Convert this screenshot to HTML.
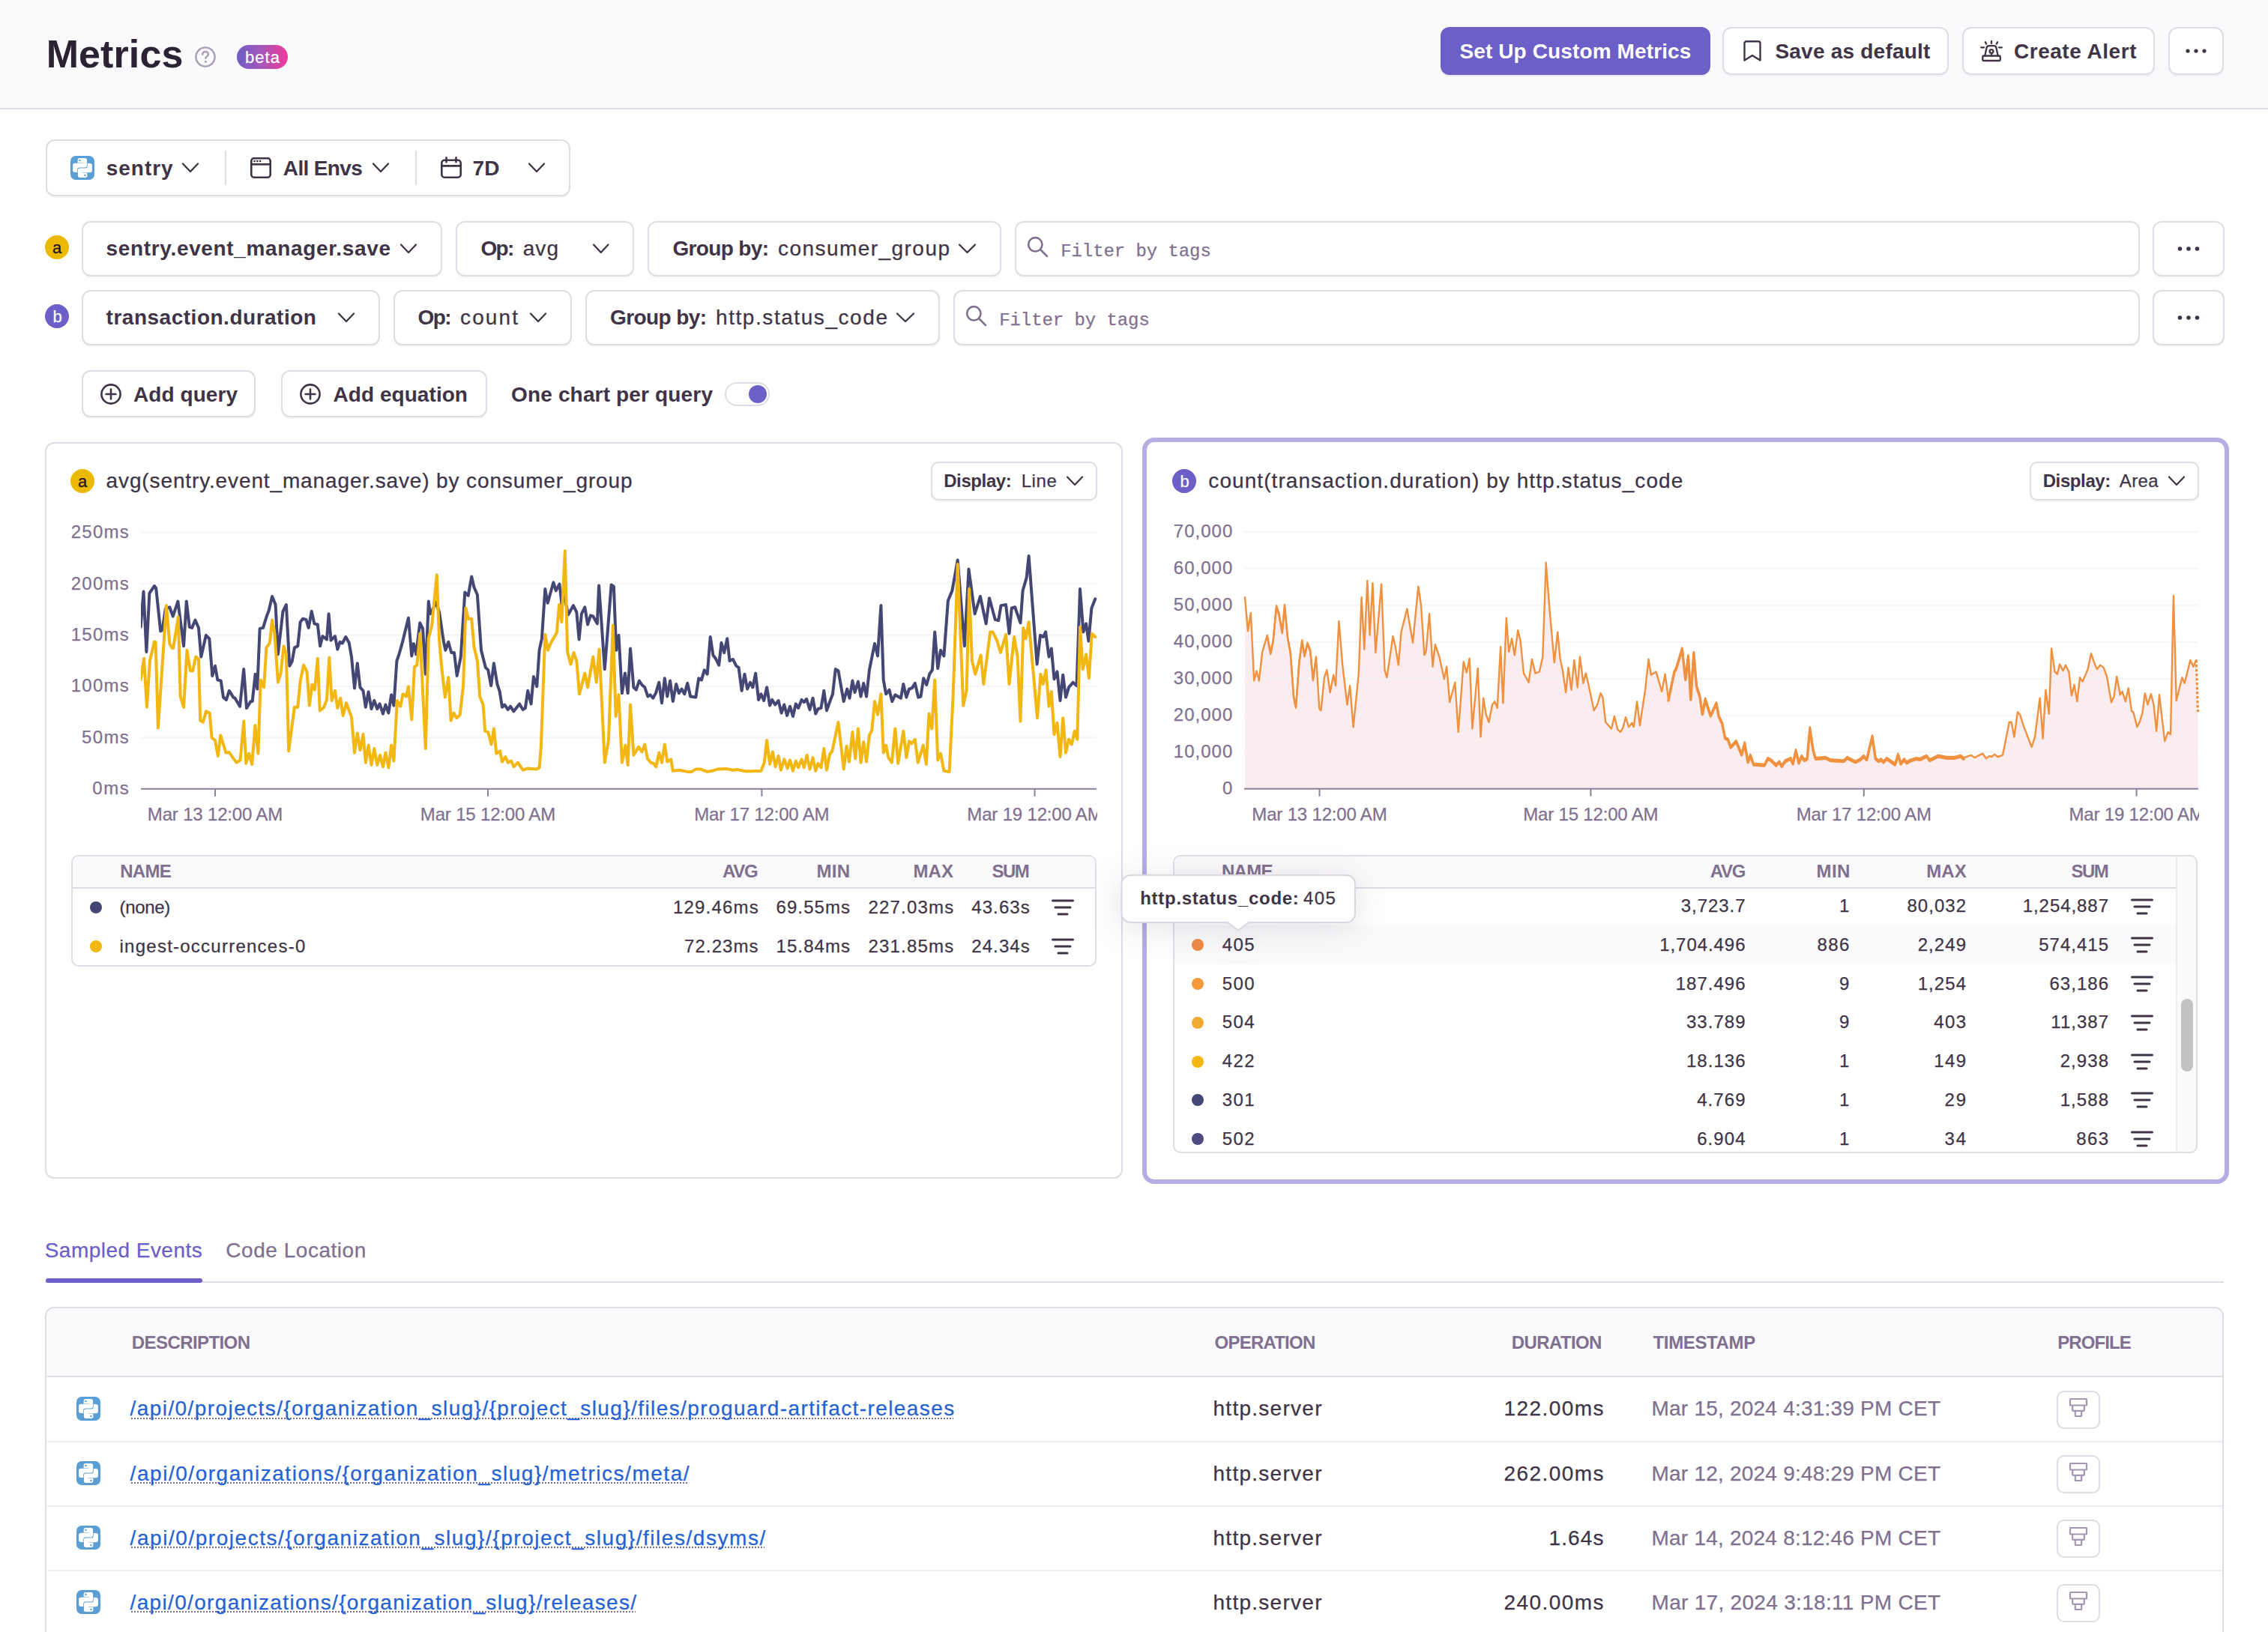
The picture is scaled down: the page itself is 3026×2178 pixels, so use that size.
<!DOCTYPE html>
<html><head><meta charset="utf-8"><style>
html,body{margin:0;padding:0;width:3026px;height:2178px;overflow:hidden;background:#fff;position:relative}
</style></head><body>
<div style="position:absolute;left:0px;top:0px;width:3026px;height:144px;box-sizing:border-box;z-index:1;background:#FAF9FB;"></div>
<div style="position:absolute;left:0px;top:144px;width:3026px;height:2px;box-sizing:border-box;z-index:1;background:#E0DCE5;"></div>
<svg style="position:absolute;left:259px;top:61px;z-index:1;" width="30" height="30" viewBox="0 0 30 30"><circle cx="15" cy="15" r="12.6" fill="none" stroke="#A89FB5" stroke-width="2.4"/><path d="M11.2 11.8c0-2.3 1.7-3.8 3.9-3.8s3.9 1.4 3.9 3.4c0 2.6-3.6 2.8-3.6 5.4" fill="none" stroke="#A89FB5" stroke-width="2.4" stroke-linecap="round"/><circle cx="15.3" cy="21.2" r="1.5" fill="#A89FB5"/></svg>
<div style="position:absolute;left:316px;top:60px;width:68px;height:32px;box-sizing:border-box;z-index:1;border-radius:16px;background:linear-gradient(90deg,#6C5FC7,#A856B8 50%,#F1389A);"></div>
<div style="position:absolute;left:1922px;top:36px;width:360px;height:64px;box-sizing:border-box;z-index:1;background:#6C5FC7;border-radius:12px;box-shadow:0 2px 0 rgba(43,34,51,0.08);"></div>
<div style="position:absolute;left:2298px;top:36px;width:302px;height:64px;box-sizing:border-box;z-index:1;background:#fff;border:2px solid #E0DCE5;border-radius:12px;box-shadow:0 2px 0 rgba(43,34,51,0.04);"></div>
<svg style="position:absolute;left:2322px;top:50px;z-index:3;" width="32" height="36" viewBox="0 0 32 36"><path d="M5.5 7.8a2.5 2.5 0 0 1 2.5-2.5h16a2.5 2.5 0 0 1 2.5 2.5v22.7l-10.5-6.6-10.5 6.6z" fill="none" stroke="#3E3446" stroke-width="2.4" stroke-linejoin="round"/></svg>
<div style="position:absolute;left:2618px;top:36px;width:257px;height:64px;box-sizing:border-box;z-index:1;background:#fff;border:2px solid #E0DCE5;border-radius:12px;box-shadow:0 2px 0 rgba(43,34,51,0.04);"></div>
<svg style="position:absolute;left:2636px;top:48px;z-index:3;" width="40" height="40" viewBox="0 0 40 40"><g fill="none" stroke="#3E3446" stroke-width="2.3" stroke-linecap="round" stroke-linejoin="round"><rect x="9.3" y="26.5" width="23.5" height="6.5" rx="1.2"/><path d="M12.3 26.5L14.6 15.6Q15.2 13.2 17.6 13.2H24.4Q26.8 13.2 27.4 15.6L29.7 26.5"/><circle cx="21" cy="20.6" r="2.4"/><path d="M21 23v3.5M21 7v3M12.8 8.2l1.4 2.4M29.2 8.2l-1.4 2.4M7.2 15.3h3.8M31 15.3h3.8"/></g></svg>
<div style="position:absolute;left:2893px;top:36px;width:74px;height:64px;box-sizing:border-box;z-index:1;background:#fff;border:2px solid #E0DCE5;border-radius:12px;box-shadow:0 2px 0 rgba(43,34,51,0.04);"></div>
<svg style="position:absolute;left:2910px;top:60px;z-index:3;" width="40" height="16" viewBox="0 0 40 16"><g fill="#3E3446"><circle cx="9" cy="8" r="2.6"/><circle cx="20" cy="8" r="2.6"/><circle cx="31" cy="8" r="2.6"/></g></svg>
<div style="position:absolute;left:61px;top:186px;width:700px;height:76px;box-sizing:border-box;z-index:1;background:#fff;border:2px solid #E0DCE5;border-radius:12px;box-shadow:0 2px 0 rgba(43,34,51,0.04);"></div>
<svg style="position:absolute;left:94px;top:208px;z-index:3;" width="32" height="32" viewBox="0 0 32 32"><g transform="scale(1.0)"><rect x="0" y="0" width="32" height="32" rx="7" fill="#5A9ED4"/><path d="M12.2 3.1H19.5A2.6 2.6 0 0 1 22.1 5.7V13A2.4 2.4 0 0 1 19.7 15.4H12.2A3 3 0 0 0 9.2 18.4V22H6A2.9 2.9 0 0 1 3.1 19.1V12.7A2.9 2.9 0 0 1 6 9.8H16V9.3H9.6V5.7A2.6 2.6 0 0 1 12.2 3.1Z" fill="#fff"/><path d="M12.2 3.1H19.5A2.6 2.6 0 0 1 22.1 5.7V13A2.4 2.4 0 0 1 19.7 15.4H12.2A3 3 0 0 0 9.2 18.4V22H6A2.9 2.9 0 0 1 3.1 19.1V12.7A2.9 2.9 0 0 1 6 9.8H16V9.3H9.6V5.7A2.6 2.6 0 0 1 12.2 3.1Z" fill="#fff" transform="rotate(180 16 16)"/><circle cx="12.5" cy="6" r="1.2" fill="#5A9ED4"/><circle cx="19.5" cy="26" r="1.2" fill="#5A9ED4"/></g></svg>
<svg style="position:absolute;left:241px;top:215.0px;z-index:3;" width="26" height="18" viewBox="0 0 26 18"><polyline points="3,3.5 13.0,14 23,3.5" fill="none" stroke="#3E3446" stroke-width="2.3" stroke-linecap="round" stroke-linejoin="round"/></svg>
<div style="position:absolute;left:300px;top:201px;width:2px;height:46px;box-sizing:border-box;z-index:1;background:#E0DCE5;"></div>
<svg style="position:absolute;left:330px;top:206px;z-index:3;" width="36" height="36" viewBox="0 0 36 36"><g fill="none" stroke="#3E3446" stroke-width="2.6"><rect x="5.3" y="5.3" width="25.4" height="25.4" rx="3.5"/><path d="M5.3 13.3h25.4"/></g><g fill="#3E3446"><circle cx="9.6" cy="9.1" r="1.35"/><circle cx="13.4" cy="9.1" r="1.35"/><circle cx="17.2" cy="9.1" r="1.35"/></g></svg>
<svg style="position:absolute;left:495px;top:215.0px;z-index:3;" width="26" height="18" viewBox="0 0 26 18"><polyline points="3,3.5 13.0,14 23,3.5" fill="none" stroke="#3E3446" stroke-width="2.3" stroke-linecap="round" stroke-linejoin="round"/></svg>
<div style="position:absolute;left:554px;top:201px;width:2px;height:46px;box-sizing:border-box;z-index:1;background:#E0DCE5;"></div>
<svg style="position:absolute;left:584px;top:205px;z-index:3;" width="36" height="36" viewBox="0 0 36 36"><g fill="none" stroke="#3E3446" stroke-width="2.6" stroke-linecap="round"><rect x="5.3" y="8.7" width="25.4" height="23" rx="3.8"/><path d="M5.3 16.4h25.4M11.5 5.4v5.8M24.5 5.4v5.8"/></g></svg>
<svg style="position:absolute;left:703px;top:215.0px;z-index:3;" width="26" height="18" viewBox="0 0 26 18"><polyline points="3,3.5 13.0,14 23,3.5" fill="none" stroke="#3E3446" stroke-width="2.3" stroke-linecap="round" stroke-linejoin="round"/></svg>
<div style="position:absolute;left:60px;top:314px;width:32px;height:32px;box-sizing:border-box;z-index:1;background:#EBBA00;border-radius:50%;"></div>
<div style="position:absolute;left:109px;top:295px;width:481px;height:74px;box-sizing:border-box;z-index:1;background:#fff;border:2px solid #E0DCE5;border-radius:12px;box-shadow:0 2px 0 rgba(43,34,51,0.04);"></div>
<div style="position:absolute;left:608px;top:295px;width:238px;height:74px;box-sizing:border-box;z-index:1;background:#fff;border:2px solid #E0DCE5;border-radius:12px;box-shadow:0 2px 0 rgba(43,34,51,0.04);"></div>
<div style="position:absolute;left:864px;top:295px;width:472px;height:74px;box-sizing:border-box;z-index:1;background:#fff;border:2px solid #E0DCE5;border-radius:12px;box-shadow:0 2px 0 rgba(43,34,51,0.04);"></div>
<div style="position:absolute;left:1354px;top:295px;width:1501px;height:74px;box-sizing:border-box;z-index:1;background:#fff;border:2px solid #E0DCE5;border-radius:12px;box-shadow:0 2px 0 rgba(43,34,51,0.04);"></div>
<div style="position:absolute;left:2872px;top:295px;width:96px;height:74px;box-sizing:border-box;z-index:1;background:#fff;border:2px solid #E0DCE5;border-radius:12px;box-shadow:0 2px 0 rgba(43,34,51,0.04);"></div>
<svg style="position:absolute;left:532px;top:323.0px;z-index:3;" width="26" height="18" viewBox="0 0 26 18"><polyline points="3,3.5 13.0,14 23,3.5" fill="none" stroke="#3E3446" stroke-width="2.3" stroke-linecap="round" stroke-linejoin="round"/></svg>
<svg style="position:absolute;left:788.5px;top:323.0px;z-index:3;" width="25.5" height="18" viewBox="0 0 25.5 18"><polyline points="3,3.5 12.75,14 22.5,3.5" fill="none" stroke="#3E3446" stroke-width="2.3" stroke-linecap="round" stroke-linejoin="round"/></svg>
<svg style="position:absolute;left:1277px;top:323.0px;z-index:3;" width="27" height="18" viewBox="0 0 27 18"><polyline points="3,3.5 13.5,14 24,3.5" fill="none" stroke="#3E3446" stroke-width="2.3" stroke-linecap="round" stroke-linejoin="round"/></svg>
<svg style="position:absolute;left:1369px;top:314px;z-index:3;" width="32" height="32" viewBox="0 0 32 32"><g fill="none" stroke="#80708F" stroke-width="2.6" stroke-linecap="round"><circle cx="12.3" cy="12.3" r="9.2"/><path d="M19 19l9 9"/></g></svg>
<svg style="position:absolute;left:2900px;top:324px;z-index:3;" width="40" height="16" viewBox="0 0 40 16"><g fill="#3E3446"><circle cx="8.5" cy="8" r="2.8"/><circle cx="20" cy="8" r="2.8"/><circle cx="31.5" cy="8" r="2.8"/></g></svg>
<div style="position:absolute;left:60px;top:406px;width:32px;height:32px;box-sizing:border-box;z-index:1;background:#6C5FC7;border-radius:50%;"></div>
<div style="position:absolute;left:109px;top:387px;width:398px;height:74px;box-sizing:border-box;z-index:1;background:#fff;border:2px solid #E0DCE5;border-radius:12px;box-shadow:0 2px 0 rgba(43,34,51,0.04);"></div>
<div style="position:absolute;left:525px;top:387px;width:238px;height:74px;box-sizing:border-box;z-index:1;background:#fff;border:2px solid #E0DCE5;border-radius:12px;box-shadow:0 2px 0 rgba(43,34,51,0.04);"></div>
<div style="position:absolute;left:781px;top:387px;width:473px;height:74px;box-sizing:border-box;z-index:1;background:#fff;border:2px solid #E0DCE5;border-radius:12px;box-shadow:0 2px 0 rgba(43,34,51,0.04);"></div>
<div style="position:absolute;left:1272px;top:387px;width:1583px;height:74px;box-sizing:border-box;z-index:1;background:#fff;border:2px solid #E0DCE5;border-radius:12px;box-shadow:0 2px 0 rgba(43,34,51,0.04);"></div>
<div style="position:absolute;left:2872px;top:387px;width:96px;height:74px;box-sizing:border-box;z-index:1;background:#fff;border:2px solid #E0DCE5;border-radius:12px;box-shadow:0 2px 0 rgba(43,34,51,0.04);"></div>
<svg style="position:absolute;left:449px;top:415.0px;z-index:3;" width="26" height="18" viewBox="0 0 26 18"><polyline points="3,3.5 13.0,14 23,3.5" fill="none" stroke="#3E3446" stroke-width="2.3" stroke-linecap="round" stroke-linejoin="round"/></svg>
<svg style="position:absolute;left:705px;top:415.0px;z-index:3;" width="26" height="18" viewBox="0 0 26 18"><polyline points="3,3.5 13.0,14 23,3.5" fill="none" stroke="#3E3446" stroke-width="2.3" stroke-linecap="round" stroke-linejoin="round"/></svg>
<svg style="position:absolute;left:1194px;top:415.0px;z-index:3;" width="28" height="18" viewBox="0 0 28 18"><polyline points="3,3.5 14.0,14 25,3.5" fill="none" stroke="#3E3446" stroke-width="2.3" stroke-linecap="round" stroke-linejoin="round"/></svg>
<svg style="position:absolute;left:1287px;top:406px;z-index:3;" width="32" height="32" viewBox="0 0 32 32"><g fill="none" stroke="#80708F" stroke-width="2.6" stroke-linecap="round"><circle cx="12.3" cy="12.3" r="9.2"/><path d="M19 19l9 9"/></g></svg>
<svg style="position:absolute;left:2900px;top:416px;z-index:3;" width="40" height="16" viewBox="0 0 40 16"><g fill="#3E3446"><circle cx="8.5" cy="8" r="2.8"/><circle cx="20" cy="8" r="2.8"/><circle cx="31.5" cy="8" r="2.8"/></g></svg>
<div style="position:absolute;left:109px;top:494px;width:232px;height:63px;box-sizing:border-box;z-index:1;background:#fff;border:2px solid #E0DCE5;border-radius:12px;box-shadow:0 2px 0 rgba(43,34,51,0.04);"></div>
<svg style="position:absolute;left:132px;top:510px;z-index:3;" width="32" height="32" viewBox="0 0 32 32"><g fill="none" stroke="#3E3446" stroke-width="2.6" stroke-linecap="round"><circle cx="16" cy="16" r="12.6"/><path d="M16 9.6v12.8M9.6 16h12.8"/></g></svg>
<div style="position:absolute;left:375px;top:494px;width:275px;height:63px;box-sizing:border-box;z-index:1;background:#fff;border:2px solid #E0DCE5;border-radius:12px;box-shadow:0 2px 0 rgba(43,34,51,0.04);"></div>
<svg style="position:absolute;left:398px;top:510px;z-index:3;" width="32" height="32" viewBox="0 0 32 32"><g fill="none" stroke="#3E3446" stroke-width="2.6" stroke-linecap="round"><circle cx="16" cy="16" r="12.6"/><path d="M16 9.6v12.8M9.6 16h12.8"/></g></svg>
<div style="position:absolute;left:967px;top:510px;width:60px;height:32px;box-sizing:border-box;z-index:1;background:#fff;border:2px solid #E0DCE5;border-radius:16px;"></div>
<div style="position:absolute;left:999px;top:514px;width:24px;height:24px;box-sizing:border-box;z-index:2;background:#6C5FC7;border-radius:50%;"></div>
<div style="position:absolute;left:60px;top:590px;width:1438px;height:983px;box-sizing:border-box;z-index:1;background:#fff;border:2px solid #E0DCE5;border-radius:12px;"></div>
<div style="position:absolute;left:94px;top:626px;width:32px;height:32px;box-sizing:border-box;z-index:2;background:#EBBA00;border-radius:50%;"></div>
<div style="position:absolute;left:1242px;top:616px;width:222px;height:52px;box-sizing:border-box;z-index:2;background:#fff;border:2px solid #E0DCE5;border-radius:10px;box-shadow:0 2px 0 rgba(43,34,51,0.04);"></div>
<svg style="position:absolute;left:1421px;top:633.0px;z-index:3;" width="26" height="18" viewBox="0 0 26 18"><polyline points="3,3.5 13.0,14 23,3.5" fill="none" stroke="#3E3446" stroke-width="2.2" stroke-linecap="round" stroke-linejoin="round"/></svg>
<svg style="position:absolute;left:0;top:0;z-index:2" width="3026" height="1120"><defs><clipPath id="ca"><rect x="188" y="650" width="1277" height="420"/></clipPath></defs><g clip-path="url(#ca)"><rect x="188" y="709.8" width="1275" height="2" fill="#F4F2F6" fill-opacity="0.85"/><rect x="188" y="778.2" width="1275" height="2" fill="#F4F2F6" fill-opacity="0.85"/><rect x="188" y="846.6" width="1275" height="2" fill="#F4F2F6" fill-opacity="0.85"/><rect x="188" y="915.0" width="1275" height="2" fill="#F4F2F6" fill-opacity="0.85"/><rect x="188" y="983.4" width="1275" height="2" fill="#F4F2F6" fill-opacity="0.85"/><rect x="188" y="1051.8" width="1275" height="2" fill="#8D7F9C"/><rect x="286" y="1052.8" width="2" height="10" fill="#8D7F9C"/><rect x="650" y="1052.8" width="2" height="10" fill="#8D7F9C"/><rect x="1015.4" y="1052.8" width="2" height="10" fill="#8D7F9C"/><rect x="1379.5" y="1052.8" width="2" height="10" fill="#8D7F9C"/><polyline points="187.7,836.8 191.5,789.4 195.4,869.9 199.4,791.6 206.0,782.0 208.2,785.0 214.2,842.3 216.5,841.0 220.8,812.5 226.3,810.3 230.7,822.5 237.4,802.6 245.1,862.2 248.8,802.6 252.8,836.8 256.1,837.9 260.5,827.5 265.0,838.0 268.3,876.5 274.9,847.8 279.3,852.3 283.3,901.9 287.0,888.7 290.3,907.4 294.7,908.5 298.0,930.6 302.0,933.9 305.8,921.8 311.3,930.6 313.5,931.7 320.1,942.8 325.2,893.1 329.0,945.0 334.5,936.0 336.7,936.0 340.6,899.7 343.3,919.5 346.6,839.0 351.0,837.9 355.4,823.6 358.7,814.7 363.1,796.0 367.6,807.0 370.9,873.2 377.5,815.8 381.9,807.0 386.3,888.7 389.6,883.1 393.0,864.4 397.3,862.2 400.7,830.2 404.0,825.8 408.4,826.9 411.7,837.9 415.7,815.8 419.4,832.4 423.8,833.5 427.1,862.2 430.4,849.0 436.0,853.4 438.6,819.2 441.5,854.5 447.0,849.0 450.3,866.6 453.6,856.7 456.9,858.4 461.3,850.0 465.7,857.8 469.0,876.5 473.0,918.4 476.8,885.3 480.5,917.3 484.5,921.8 487.8,943.8 491.6,923.3 495.5,946.0 499.3,935.0 503.3,946.0 506.6,939.4 511.0,952.6 514.4,940.5 518.4,951.5 522.1,927.3 525.4,941.6 529.4,882.0 532.1,874.3 536.5,858.9 544.9,824.7 549.3,875.4 551.9,858.9 555.2,873.2 560.3,831.3 564.1,839.0 567.8,899.7 571.8,802.6 574.0,819.2 577.3,813.6 581.7,803.7 586.1,816.9 591.6,854.5 594.3,867.7 598.3,856.7 602.2,871.0 606.0,871.0 609.7,901.9 614.8,876.5 620.3,790.5 624.7,794.9 629.2,769.5 632.5,783.8 636.9,793.8 642.0,867.7 647.9,890.9 651.2,894.2 655.2,915.1 658.9,885.3 663.4,912.9 666.7,922.9 670.0,943.8 673.3,940.5 677.7,947.1 681.0,942.7 685.4,949.3 693.1,939.4 697.6,947.1 700.9,944.9 704.2,921.8 708.6,939.4 711.9,903.0 716.3,916.2 719.6,867.7 722.9,852.3 727.3,786.1 730.7,804.8 738.4,777.2 741.7,788.3 746.5,779.4 749.4,805.9 752.7,794.9 758.2,820.3 764.9,808.1 769.3,816.9 772.6,853.4 775.9,819.2 780.3,810.3 784.1,833.5 788.0,821.4 791.3,822.5 796.8,832.4 799.1,781.6 806.8,893.1 815.6,780.5 818.9,782.7 822.2,867.7 825.5,847.8 829.9,925.1 833.9,898.6 837.7,925.1 841.0,865.5 845.4,917.3 848.8,920.7 852.8,908.5 856.5,914.0 860.3,917.3 864.3,929.5 867.6,927.3 871.3,931.7 874.9,925.1 879.3,910.7 883.0,938.3 886.8,905.2 890.3,929.5 894.1,908.5 897.8,936.1 902.2,912.9 905.8,925.1 909.5,919.5 913.3,926.2 917.2,911.8 921.2,929.5 928.3,930.6 932.2,905.2 936.0,907.4 939.7,894.2 943.7,899.7 947.7,850.0 951.4,874.3 954.7,878.7 959.2,887.6 962.5,857.8 966.2,871.0 970.2,852.3 973.5,882.0 977.9,879.8 982.3,888.7 985.6,890.9 989.6,921.8 993.4,899.7 997.1,919.5 1001.1,910.7 1004.4,917.3 1008.1,898.6 1012.1,933.9 1015.4,926.2 1019.2,935.0 1023.1,917.3 1027.1,941.6 1030.2,933.9 1034.2,940.5 1038.6,935.0 1042.6,951.5 1046.3,940.5 1050.1,954.9 1054.0,942.7 1058.0,956.0 1061.8,939.4 1065.1,944.9 1069.5,933.9 1072.8,937.2 1076.1,932.8 1080.5,947.1 1084.5,931.7 1088.2,952.6 1091.5,946.0 1095.5,944.9 1099.3,921.8 1103.0,948.2 1108.1,933.9 1111.0,926.2 1114.7,893.1 1118.5,895.3 1125.7,936.1 1130.2,919.5 1133.5,931.7 1137.4,908.5 1140.5,924.0 1144.9,909.6 1148.5,929.5 1152.2,911.8 1156.0,929.5 1159.9,894.2 1167.0,858.9 1171.0,875.4 1175.4,808.1 1178.7,907.4 1182.1,926.2 1186.5,920.7 1190.3,936.1 1194.3,927.3 1202.0,931.7 1205.3,912.9 1209.3,930.6 1213.0,919.5 1216.8,918.4 1220.8,911.8 1225.2,930.6 1228.5,929.5 1232.2,905.2 1236.2,914.0 1240.2,899.7 1243.9,894.2 1247.2,843.4 1251.2,892.0 1255.0,867.7 1259.4,875.4 1264.9,801.5 1270.4,788.3 1277.7,747.4 1286.9,862.2 1292.5,759.6 1300.6,819.2 1307.9,796.0 1315.6,832.4 1320.0,798.2 1327.8,826.9 1332.2,828.0 1335.5,808.1 1342.1,807.0 1346.5,845.6 1349.8,811.4 1354.2,810.3 1361.5,831.3 1364.6,788.3 1369.7,770.6 1372.6,741.9 1383.6,886.5 1388.0,847.8 1391.8,850.0 1395.1,843.4 1399.5,876.5 1402.8,865.5 1406.5,906.3 1410.5,896.4 1414.5,935.0 1418.2,900.8 1422.0,930.6 1426.0,917.3 1431.5,910.7 1436.5,915.1 1441.0,786.1 1445.4,843.4 1449.1,832.4 1452.4,855.6 1456.4,811.4 1461.3,799.3" fill="none" stroke="#444674" stroke-width="4" stroke-linejoin="round" stroke-linecap="round"/><polyline points="187.7,907.4 192.1,878.7 195.9,943.8 199.9,882.0 206.0,856.2 207.6,857.0 210.9,971.4 221.9,808.1 226.3,858.9 229.6,865.0 231.2,865.0 237.8,823.6 240.7,929.5 245.1,943.8 249.5,867.7 253.9,895.3 257.2,895.3 261.2,876.5 265.0,879.8 267.2,961.5 270.9,963.7 274.9,949.3 279.7,951.5 282.6,984.6 287.0,988.0 290.8,1008.9 294.3,981.3 301.4,1004.5 305.8,1004.0 311.3,1012.2 315.7,1017.7 320.6,1014.4 325.2,962.6 328.3,1018.8 332.2,1005.6 336.2,1020.0 340.4,968.1 344.4,1005.6 347.7,907.4 352.1,917.3 355.4,864.4 359.8,858.4 363.1,827.5 366.4,845.6 370.9,910.7 374.6,898.6 378.6,862.2 381.9,873.2 385.2,1002.3 392.9,943.8 397.3,943.8 400.7,908.5 405.1,887.6 409.5,896.4 412.8,941.6 416.5,913.6 419.9,920.6 423.8,878.7 426.7,948.2 431.5,944.9 436.0,933.9 439.3,877.6 442.6,935.0 447.0,921.8 450.3,945.0 454.3,931.7 457.6,954.9 462.0,938.3 469.0,957.1 473.0,1004.5 476.8,978.5 480.5,1001.2 484.5,979.8 487.8,1017.7 491.6,994.6 495.5,1021.0 499.3,999.0 503.3,1021.0 507.0,1007.8 511.0,1023.3 514.4,1004.5 518.4,1024.4 522.1,994.6 525.4,1015.5 529.9,935.0 534.3,942.7 537.6,926.2 542.0,929.5 544.9,916.2 549.3,960.4 553.0,889.8 556.3,887.6 560.3,845.6 567.8,999.0 571.8,852.3 576.2,834.6 582.8,767.3 586.1,854.5 589.4,892.0 593.8,930.6 598.3,904.1 601.6,961.5 605.3,951.5 609.3,958.2 613.7,953.8 618.1,915.1 621.4,811.4 624.7,825.8 629.2,825.8 632.5,863.3 636.9,882.0 640.2,929.5 644.6,940.5 647.2,975.8 651.2,976.9 655.6,993.5 658.9,972.5 662.3,1005.6 667.1,1002.3 670.0,1016.6 674.4,1010.0 677.7,1017.7 682.1,1015.5 685.4,1023.3 690.9,1017.7 697.6,1027.7 704.2,1025.5 715.2,1026.6 719.6,1024.4 721.8,997.9 727.3,846.7 731.1,867.7 735.1,857.8 739.5,850.0 742.8,844.5 746.1,807.0 749.4,830.2 753.8,735.3 757.1,869.9 761.5,886.5 765.5,871.0 769.3,882.0 773.0,926.2 780.3,898.6 784.1,917.3 791.3,876.5 795.7,910.7 799.5,866.6 806.8,1017.7 811.9,988.0 817.8,834.6 821.6,956.0 825.5,927.3 829.9,1017.7 834.4,994.6 837.7,1021.1 841.0,940.5 845.4,1007.8 852.1,996.8 856.5,1003.4 860.3,993.5 863.8,1012.2 868.2,1017.7 872.0,1018.8 875.3,1023.3 879.3,1004.5 883.0,1017.7 886.8,993.5 890.3,1016.6 895.2,1013.3 897.8,1028.8 906.2,1027.7 917.2,1029.9 922.7,1029.9 928.3,1026.6 934.9,1026.6 943.7,1029.9 950.3,1028.8 956.9,1026.6 970.2,1026.1 977.9,1027.7 983.4,1027.0 994.5,1029.2 1003.3,1029.2 1015.4,1028.8 1019.8,1017.7 1023.1,988.0 1027.1,1019.9 1030.9,1003.4 1034.6,1023.3 1038.6,1008.9 1041.9,1027.7 1046.3,1013.3 1050.7,1025.5 1054.0,1014.4 1058.0,1028.8 1061.8,1015.5 1065.1,1024.4 1069.5,1013.3 1072.8,1024.4 1076.5,1007.8 1080.5,1026.6 1084.5,1011.1 1088.2,1028.8 1091.5,1018.8 1095.5,1024.4 1099.3,999.0 1103.0,1027.7 1107.0,1006.7 1110.3,1002.3 1113.6,986.8 1118.5,963.7 1125.7,1026.6 1129.5,995.7 1133.0,1016.6 1137.4,976.9 1141.2,1012.2 1144.9,972.5 1148.5,1017.7 1152.2,990.2 1156.0,1016.6 1159.9,981.3 1163.3,974.7 1167.0,936.1 1171.0,953.8 1175.4,926.2 1178.7,1004.5 1182.1,994.6 1185.4,1011.1 1189.9,1017.7 1194.3,972.5 1198.2,1018.8 1205.3,975.8 1209.3,1011.1 1213.0,989.1 1216.3,992.4 1220.8,986.8 1224.7,1017.7 1231.8,994.6 1235.8,1019.9 1239.5,952.6 1243.3,972.5 1247.2,907.4 1251.2,1014.4 1255.0,1005.6 1259.4,1028.8 1266.6,1029.9 1271.5,931.7 1277.7,753.0 1285.2,941.6 1289.6,921.8 1293.1,786.1 1296.9,882.0 1301.3,899.7 1308.6,874.3 1312.3,912.9 1321.1,843.4 1324.5,843.4 1330.0,854.5 1335.0,871.0 1342.1,846.7 1346.5,912.9 1353.1,850.0 1357.6,876.5 1361.5,962.6 1365.3,837.9 1368.6,852.3 1372.6,830.2 1384.0,958.2 1388.4,899.7 1391.8,912.9 1395.5,894.2 1399.5,942.7 1402.8,922.9 1406.5,980.2 1410.5,964.8 1414.5,1010.0 1418.2,958.2 1422.0,1004.5 1426.0,986.8 1429.9,993.5 1433.7,975.8 1437.4,986.8 1441.0,836.8 1444.7,893.1 1449.1,873.2 1452.9,905.2 1456.8,845.6 1461.3,850.0" fill="none" stroke="#F2B712" stroke-width="4" stroke-linejoin="round" stroke-linecap="round"/></g></svg>
<div style="position:absolute;left:1464px;top:1070px;width:30px;height:35px;box-sizing:border-box;z-index:4;background:#fff;"></div>
<div style="position:absolute;left:94.5px;top:1140.5px;width:1368.5px;height:149.5px;box-sizing:border-box;z-index:1;background:#fff;border:2px solid #E0DCE5;border-radius:10px;overflow:hidden;"></div>
<div style="position:absolute;left:96.5px;top:1142.5px;width:1364.5px;height:41.5px;box-sizing:border-box;z-index:1;background:#FAF9FB;border-radius:8px 8px 0 0;"></div>
<div style="position:absolute;left:96.5px;top:1184px;width:1364.5px;height:2px;box-sizing:border-box;z-index:1;background:#E0DCE5;"></div>
<div style="position:absolute;left:120px;top:1203.0px;width:16px;height:16.0px;box-sizing:border-box;z-index:2;background:#444674;border-radius:50%;"></div>
<svg style="position:absolute;left:1401px;top:1197.0px;z-index:3;" width="34" height="28" viewBox="0 0 34 28"><g stroke="#3E3446" stroke-width="3" stroke-linecap="round"><path d="M3.5 5h27M7 14h20M11 23h12"/></g></svg>
<div style="position:absolute;left:120px;top:1255.4px;width:16px;height:16.0px;box-sizing:border-box;z-index:2;background:#F2B712;border-radius:50%;"></div>
<svg style="position:absolute;left:1401px;top:1249.4px;z-index:3;" width="34" height="28" viewBox="0 0 34 28"><g stroke="#3E3446" stroke-width="3" stroke-linecap="round"><path d="M3.5 5h27M7 14h20M11 23h12"/></g></svg>
<div style="position:absolute;left:1524px;top:584px;width:1450px;height:996px;box-sizing:border-box;z-index:1;background:#fff;border:6px solid #B4AEE2;border-radius:16px;"></div>
<div style="position:absolute;left:1564px;top:626px;width:32px;height:32px;box-sizing:border-box;z-index:2;background:#6C5FC7;border-radius:50%;"></div>
<div style="position:absolute;left:2707.5px;top:616px;width:226.0px;height:52px;box-sizing:border-box;z-index:2;background:#fff;border:2px solid #E0DCE5;border-radius:10px;box-shadow:0 2px 0 rgba(43,34,51,0.04);"></div>
<svg style="position:absolute;left:2891px;top:633.0px;z-index:3;" width="26" height="18" viewBox="0 0 26 18"><polyline points="3,3.5 13.0,14 23,3.5" fill="none" stroke="#3E3446" stroke-width="2.2" stroke-linecap="round" stroke-linejoin="round"/></svg>
<svg style="position:absolute;left:0;top:0;z-index:2" width="3026" height="1120"><defs><clipPath id="cb"><rect x="1660" y="650" width="1275" height="420"/></clipPath></defs><g clip-path="url(#cb)"><polygon points="1661.0,1052.7 1661.0,797.1 1665.0,842.3 1668.8,818.0 1673.2,908.5 1676.5,895.3 1679.8,908.5 1684.2,869.9 1690.8,847.8 1695.2,871.0 1698.5,855.6 1703.0,808.1 1706.3,818.0 1710.7,843.4 1714.0,807.0 1718.0,850.0 1721.7,869.9 1726.1,929.5 1729.0,942.7 1733.4,883.1 1737.2,854.5 1740.5,874.3 1744.4,857.8 1748.2,867.7 1751.9,906.3 1755.9,876.5 1760.3,946.0 1762.5,948.2 1766.9,904.1 1770.3,894.2 1774.7,924.0 1779.1,900.8 1782.0,915.1 1786.4,829.1 1791.2,887.6 1797.4,940.5 1801.1,915.1 1805.6,970.3 1812.8,898.6 1816.6,797.1 1820.3,866.6 1824.3,775.0 1827.6,847.8 1831.4,778.3 1835.3,871.0 1843.1,779.4 1847.5,894.2 1850.4,904.1 1858.5,848.9 1861.8,863.3 1865.8,887.6 1869.5,843.4 1877.3,812.5 1885.0,857.8 1892.3,782.7 1896.0,808.1 1900.4,874.3 1902.6,869.9 1907.1,819.2 1911.5,889.8 1914.8,860.0 1920.3,876.5 1926.9,906.3 1930.2,889.8 1934.2,937.2 1941.3,910.7 1945.7,976.9 1952.7,883.1 1956.7,897.5 1960.7,878.7 1964.4,972.5 1971.7,892.0 1975.5,983.5 1979.2,931.7 1982.7,953.8 1986.5,963.7 1991.0,940.5 1994.3,936.1 1997.7,944.9 2002.1,863.3 2005.4,938.3 2009.8,824.7 2013.1,869.9 2017.1,852.3 2020.8,874.3 2025.2,841.2 2028.5,854.5 2033.0,898.6 2039.6,910.7 2044.0,879.8 2048.4,898.6 2053.9,896.4 2058.3,876.5 2062.7,750.8 2067.2,810.3 2073.8,884.2 2078.2,843.4 2081.5,878.7 2084.8,894.2 2089.2,924.0 2092.5,890.9 2096.5,920.7 2100.3,880.9 2104.7,917.3 2108.0,876.5 2112.4,911.8 2115.7,898.6 2119.0,911.8 2126.7,948.2 2131.1,940.5 2135.6,925.1 2138.4,930.6 2142.2,963.7 2149.9,972.5 2153.9,956.0 2158.3,973.6 2162.0,976.9 2165.3,971.4 2169.1,957.1 2173.1,970.3 2177.5,964.8 2179.7,970.3 2184.1,936.1 2187.9,968.1 2195.1,920.7 2199.5,879.8 2202.9,900.8 2209.5,896.4 2217.2,922.9 2221.6,899.7 2226.0,932.8 2233.8,895.3 2236.4,890.9 2244.3,864.4 2248.8,905.2 2252.5,874.3 2255.8,931.7 2259.8,869.9 2263.5,914.0 2268.0,928.4 2271.3,951.5 2275.2,931.7 2282.3,953.8 2290.0,937.2 2293.3,954.9 2297.7,963.7 2301.7,983.5 2305.5,985.7 2309.2,995.7 2316.5,988.0 2323.7,1005.6 2327.7,990.2 2332.1,1015.5 2335.4,1006.7 2339.8,1018.8 2354.1,1019.9 2358.5,1011.1 2363.0,1013.3 2369.6,1019.9 2374.0,1015.5 2377.3,1021.1 2381.7,1014.4 2389.4,1011.1 2392.1,1017.7 2396.1,1000.1 2400.0,1016.6 2403.8,1007.8 2407.5,1013.3 2411.1,1011.1 2414.8,970.3 2419.2,1000.1 2422.5,1011.1 2435.8,1010.0 2442.4,1013.3 2460.0,1014.4 2464.5,1010.0 2475.5,1015.5 2482.1,1012.2 2486.5,1007.8 2490.5,1012.2 2498.0,981.3 2502.4,1011.1 2506.4,1014.4 2509.7,1012.2 2513.0,1015.5 2517.4,1011.1 2528.4,1018.8 2532.4,1005.6 2536.2,1017.7 2540.6,1012.2 2543.9,1016.6 2549.4,1013.3 2557.1,1011.1 2561.5,1012.2 2570.4,1007.8 2574.8,1013.3 2585.8,1007.8 2596.8,1010.0 2607.9,1010.0 2615.6,1007.8 2620.0,1011.1 2629.9,1007.8 2634.4,1011.1 2645.4,1005.6 2649.9,1012.2 2654.3,1008.9 2657.7,1010.0 2661.0,1006.7 2665.4,1010.0 2672.0,1007.8 2680.8,963.7 2683.7,963.7 2687.4,983.5 2691.9,950.4 2695.2,953.8 2699.6,968.1 2710.6,996.8 2715.0,983.5 2721.6,931.7 2725.6,985.7 2729.4,920.7 2733.8,952.6 2737.1,865.5 2741.5,896.4 2744.8,899.7 2748.1,886.5 2752.5,895.3 2755.8,887.6 2760.3,896.4 2764.0,928.4 2767.5,914.0 2771.3,936.1 2775.0,904.1 2778.6,909.6 2785.6,893.1 2790.0,872.1 2794.5,885.3 2797.8,893.1 2802.2,887.6 2806.6,890.9 2811.0,903.0 2817.0,937.2 2820.5,929.5 2824.2,903.0 2828.7,927.3 2831.5,922.9 2835.9,936.1 2839.7,918.4 2844.1,949.3 2846.3,950.4 2851.4,970.3 2855.1,962.6 2858.4,951.5 2861.8,925.1 2865.5,940.5 2869.9,926.2 2873.5,940.5 2877.2,975.8 2881.0,927.3 2888.2,989.1 2892.6,976.9 2896.0,980.2 2899.9,794.9 2903.7,935.0 2911.4,904.1 2914.7,911.8 2922.4,880.9 2926.4,889.8 2930.2,880.9 2932.5,950.0 2932.5,1052.7" fill="#FBEDEF"/><rect x="1660" y="708.8" width="1273" height="2" fill="#F4F2F6" fill-opacity="0.85"/><rect x="1660" y="757.8" width="1273" height="2" fill="#F4F2F6" fill-opacity="0.85"/><rect x="1660" y="806.8" width="1273" height="2" fill="#F4F2F6" fill-opacity="0.85"/><rect x="1660" y="855.8" width="1273" height="2" fill="#F4F2F6" fill-opacity="0.85"/><rect x="1660" y="904.7" width="1273" height="2" fill="#F4F2F6" fill-opacity="0.85"/><rect x="1660" y="953.7" width="1273" height="2" fill="#F4F2F6" fill-opacity="0.85"/><rect x="1660" y="1002.7" width="1273" height="2" fill="#F4F2F6" fill-opacity="0.85"/><rect x="1660" y="1051.7" width="1273" height="2" fill="#8D7F9C"/><rect x="1759.5" y="1052.7" width="2" height="10" fill="#8D7F9C"/><rect x="2121.4" y="1052.7" width="2" height="10" fill="#8D7F9C"/><rect x="2485.8" y="1052.7" width="2" height="10" fill="#8D7F9C"/><rect x="2849.6" y="1052.7" width="2" height="10" fill="#8D7F9C"/><polyline points="1661.0,797.1 1665.0,842.3 1668.8,818.0 1673.2,908.5 1676.5,895.3 1679.8,908.5 1684.2,869.9 1690.8,847.8 1695.2,871.0 1698.5,855.6 1703.0,808.1 1706.3,818.0 1710.7,843.4 1714.0,807.0 1718.0,850.0 1721.7,869.9 1726.1,929.5 1729.0,942.7 1733.4,883.1 1737.2,854.5 1740.5,874.3 1744.4,857.8 1748.2,867.7 1751.9,906.3 1755.9,876.5 1760.3,946.0 1762.5,948.2 1766.9,904.1 1770.3,894.2 1774.7,924.0 1779.1,900.8 1782.0,915.1 1786.4,829.1 1791.2,887.6 1797.4,940.5 1801.1,915.1 1805.6,970.3 1812.8,898.6 1816.6,797.1 1820.3,866.6 1824.3,775.0 1827.6,847.8 1831.4,778.3 1835.3,871.0 1843.1,779.4 1847.5,894.2 1850.4,904.1 1858.5,848.9 1861.8,863.3 1865.8,887.6 1869.5,843.4 1877.3,812.5 1885.0,857.8 1892.3,782.7 1896.0,808.1 1900.4,874.3 1902.6,869.9 1907.1,819.2 1911.5,889.8 1914.8,860.0 1920.3,876.5 1926.9,906.3 1930.2,889.8 1934.2,937.2 1941.3,910.7 1945.7,976.9 1952.7,883.1 1956.7,897.5 1960.7,878.7 1964.4,972.5 1971.7,892.0 1975.5,983.5 1979.2,931.7 1982.7,953.8 1986.5,963.7 1991.0,940.5 1994.3,936.1 1997.7,944.9 2002.1,863.3 2005.4,938.3 2009.8,824.7 2013.1,869.9 2017.1,852.3 2020.8,874.3 2025.2,841.2 2028.5,854.5 2033.0,898.6 2039.6,910.7 2044.0,879.8 2048.4,898.6 2053.9,896.4 2058.3,876.5 2062.7,750.8 2067.2,810.3 2073.8,884.2 2078.2,843.4 2081.5,878.7 2084.8,894.2 2089.2,924.0 2092.5,890.9 2096.5,920.7 2100.3,880.9 2104.7,917.3 2108.0,876.5 2112.4,911.8 2115.7,898.6 2119.0,911.8 2126.7,948.2 2131.1,940.5 2135.6,925.1 2138.4,930.6 2142.2,963.7 2149.9,972.5 2153.9,956.0 2158.3,973.6 2162.0,976.9 2165.3,971.4 2169.1,957.1 2173.1,970.3 2177.5,964.8 2179.7,970.3 2184.1,936.1 2187.9,968.1 2195.1,920.7 2199.5,879.8 2202.9,900.8 2209.5,896.4 2217.2,922.9 2221.6,899.7 2226.0,932.8 2233.8,895.3 2236.4,890.9 2244.3,864.4 2248.8,905.2 2252.5,874.3 2255.8,931.7 2259.8,869.9 2263.5,914.0 2268.0,928.4 2271.3,951.5 2275.2,931.7 2282.3,953.8 2290.0,937.2 2293.3,954.9 2297.7,963.7 2301.7,983.5 2305.5,985.7 2309.2,995.7 2316.5,988.0 2323.7,1005.6 2327.7,990.2 2332.1,1015.5 2335.4,1006.7 2339.8,1018.8 2354.1,1019.9 2358.5,1011.1 2363.0,1013.3 2369.6,1019.9 2374.0,1015.5 2377.3,1021.1 2381.7,1014.4 2389.4,1011.1 2392.1,1017.7 2396.1,1000.1 2400.0,1016.6 2403.8,1007.8 2407.5,1013.3 2411.1,1011.1 2414.8,970.3 2419.2,1000.1 2422.5,1011.1 2435.8,1010.0 2442.4,1013.3 2460.0,1014.4 2464.5,1010.0 2475.5,1015.5 2482.1,1012.2 2486.5,1007.8 2490.5,1012.2 2498.0,981.3 2502.4,1011.1 2506.4,1014.4 2509.7,1012.2 2513.0,1015.5 2517.4,1011.1 2528.4,1018.8 2532.4,1005.6 2536.2,1017.7 2540.6,1012.2 2543.9,1016.6 2549.4,1013.3 2557.1,1011.1 2561.5,1012.2 2570.4,1007.8 2574.8,1013.3 2585.8,1007.8 2596.8,1010.0 2607.9,1010.0 2615.6,1007.8 2620.0,1011.1 2629.9,1007.8 2634.4,1011.1 2645.4,1005.6 2649.9,1012.2 2654.3,1008.9 2657.7,1010.0 2661.0,1006.7 2665.4,1010.0 2672.0,1007.8 2680.8,963.7 2683.7,963.7 2687.4,983.5 2691.9,950.4 2695.2,953.8 2699.6,968.1 2710.6,996.8 2715.0,983.5 2721.6,931.7 2725.6,985.7 2729.4,920.7 2733.8,952.6 2737.1,865.5 2741.5,896.4 2744.8,899.7 2748.1,886.5 2752.5,895.3 2755.8,887.6 2760.3,896.4 2764.0,928.4 2767.5,914.0 2771.3,936.1 2775.0,904.1 2778.6,909.6 2785.6,893.1 2790.0,872.1 2794.5,885.3 2797.8,893.1 2802.2,887.6 2806.6,890.9 2811.0,903.0 2817.0,937.2 2820.5,929.5 2824.2,903.0 2828.7,927.3 2831.5,922.9 2835.9,936.1 2839.7,918.4 2844.1,949.3 2846.3,950.4 2851.4,970.3 2855.1,962.6 2858.4,951.5 2861.8,925.1 2865.5,940.5 2869.9,926.2 2873.5,940.5 2877.2,975.8 2881.0,927.3 2888.2,989.1 2892.6,976.9 2896.0,980.2 2899.9,794.9 2903.7,935.0 2911.4,904.1 2914.7,911.8 2922.4,880.9 2926.4,889.8 2930.2,880.9" fill="none" stroke="#F0913F" stroke-width="2.4" stroke-linejoin="round" stroke-linecap="round"/><polyline points="2226.0,935.0 2233.8,897.5 2236.4,893.1 2244.3,866.6 2248.8,907.4 2252.5,876.5 2255.8,933.9 2259.8,872.1 2263.5,916.2 2268.0,930.6 2271.3,953.7 2275.2,933.9 2282.3,956.0 2290.0,939.4 2293.3,957.1 2297.7,965.9 2301.7,985.7 2305.5,987.9 2309.2,997.9 2316.5,990.2 2323.7,1007.8 2327.7,992.4 2332.1,1017.7 2335.4,1008.9 2339.8,1021.0 2354.1,1022.1 2358.5,1013.3 2363.0,1015.5 2369.6,1022.1 2374.0,1017.7 2377.3,1023.3 2381.7,1016.6 2389.4,1013.3 2392.1,1019.9 2396.1,1002.3 2400.0,1018.8 2403.8,1010.0 2407.5,1015.5 2411.1,1013.3 2414.8,972.5 2419.2,1002.3 2422.5,1013.3 2435.8,1012.2 2442.4,1015.5 2460.0,1016.6 2464.5,1012.2 2475.5,1017.7 2482.1,1014.4 2486.5,1010.0 2490.5,1014.4 2498.0,983.5 2502.4,1013.3 2506.4,1016.6 2509.7,1014.4 2513.0,1017.7 2517.4,1013.3 2528.4,1021.0 2532.4,1007.8 2536.2,1019.9 2540.6,1014.4 2543.9,1018.8 2549.4,1015.5 2557.1,1013.3 2561.5,1014.4 2570.4,1010.0 2574.8,1015.5 2585.8,1010.0 2596.8,1012.2 2607.9,1012.2 2615.6,1010.0 2620.0,1013.3" fill="none" stroke="#F0913F" stroke-width="3.4" stroke-linejoin="round" stroke-linecap="round"/><polyline points="1690.8,849.8 1695.2,873.0 1698.5,857.6 1703.0,810.1 1706.3,820.0 1710.7,845.4 1714.0,809.0 1718.0,852.0 1721.7,871.9 1726.1,931.5 1729.0,944.7 1733.4,885.1 1737.2,856.5 1740.5,876.3 1744.4,859.8 1748.2,869.7 1751.9,908.3 1755.9,878.5" fill="none" stroke="#F0913F" stroke-width="2.4" stroke-linejoin="round" stroke-linecap="round"/><polyline points="2930.2,880.9 2932.5,950.0" fill="none" stroke="#F0913F" stroke-width="3.2" stroke-linejoin="round" stroke-linecap="butt" stroke-dasharray="3.5 2.5"/></g></svg>
<div style="position:absolute;left:2934px;top:1070px;width:32px;height:35px;box-sizing:border-box;z-index:4;background:#fff;"></div>
<div style="position:absolute;left:1565px;top:1140.5px;width:1367px;height:398.5px;box-sizing:border-box;z-index:1;background:#fff;border:2px solid #E0DCE5;border-radius:10px;overflow:hidden;"></div>
<div style="position:absolute;left:1567px;top:1142.5px;width:1336px;height:41.5px;box-sizing:border-box;z-index:1;background:#FAF9FB;border-radius:8px 0 0 0;"></div>
<div style="position:absolute;left:1567px;top:1184px;width:1336px;height:2px;box-sizing:border-box;z-index:1;background:#E0DCE5;"></div>
<div style="position:absolute;left:2903px;top:1142.5px;width:27px;height:394.5px;box-sizing:border-box;z-index:1;background:#FAFAFA;border-left:2px solid #EDEDED;border-radius:0 8px 8px 0;"></div>
<div style="position:absolute;left:2910px;top:1333px;width:16px;height:97px;box-sizing:border-box;z-index:2;background:#C2C2C2;border-radius:8px;"></div>
<div style="position:absolute;left:1567px;top:1235px;width:1336px;height:52px;box-sizing:border-box;z-index:1;background:#FAF9FB;"></div>
<svg style="position:absolute;left:2841px;top:1195.6px;z-index:3;" width="34" height="28" viewBox="0 0 34 28"><g stroke="#3E3446" stroke-width="3" stroke-linecap="round"><path d="M3.5 5h27M7 14h20M11 23h12"/></g></svg>
<div style="position:absolute;left:1590px;top:1253.35px;width:16px;height:16.0px;box-sizing:border-box;z-index:2;background:#EE8A45;border-radius:50%;"></div>
<svg style="position:absolute;left:2841px;top:1247.35px;z-index:3;" width="34" height="28" viewBox="0 0 34 28"><g stroke="#3E3446" stroke-width="3" stroke-linecap="round"><path d="M3.5 5h27M7 14h20M11 23h12"/></g></svg>
<div style="position:absolute;left:1590px;top:1305.1px;width:16px;height:16.0px;box-sizing:border-box;z-index:2;background:#F49A3A;border-radius:50%;"></div>
<svg style="position:absolute;left:2841px;top:1299.1px;z-index:3;" width="34" height="28" viewBox="0 0 34 28"><g stroke="#3E3446" stroke-width="3" stroke-linecap="round"><path d="M3.5 5h27M7 14h20M11 23h12"/></g></svg>
<div style="position:absolute;left:1590px;top:1356.85px;width:16px;height:16.0px;box-sizing:border-box;z-index:2;background:#F2A932;border-radius:50%;"></div>
<svg style="position:absolute;left:2841px;top:1350.85px;z-index:3;" width="34" height="28" viewBox="0 0 34 28"><g stroke="#3E3446" stroke-width="3" stroke-linecap="round"><path d="M3.5 5h27M7 14h20M11 23h12"/></g></svg>
<div style="position:absolute;left:1590px;top:1408.6px;width:16px;height:16.0px;box-sizing:border-box;z-index:2;background:#F2B712;border-radius:50%;"></div>
<svg style="position:absolute;left:2841px;top:1402.6px;z-index:3;" width="34" height="28" viewBox="0 0 34 28"><g stroke="#3E3446" stroke-width="3" stroke-linecap="round"><path d="M3.5 5h27M7 14h20M11 23h12"/></g></svg>
<div style="position:absolute;left:1590px;top:1460.35px;width:16px;height:16.0px;box-sizing:border-box;z-index:2;background:#444674;border-radius:50%;"></div>
<svg style="position:absolute;left:2841px;top:1454.35px;z-index:3;" width="34" height="28" viewBox="0 0 34 28"><g stroke="#3E3446" stroke-width="3" stroke-linecap="round"><path d="M3.5 5h27M7 14h20M11 23h12"/></g></svg>
<div style="position:absolute;left:1590px;top:1512.1px;width:16px;height:16.0px;box-sizing:border-box;z-index:2;background:#4E4A80;border-radius:50%;"></div>
<svg style="position:absolute;left:2841px;top:1506.1px;z-index:3;" width="34" height="28" viewBox="0 0 34 28"><g stroke="#3E3446" stroke-width="3" stroke-linecap="round"><path d="M3.5 5h27M7 14h20M11 23h12"/></g></svg>
<svg style="position:absolute;left:1480px;top:1150px;z-index:8;filter:drop-shadow(0 6px 22px rgba(43,34,51,0.13))" width="350" height="110" viewBox="0 0 350 110"><path d="M28.5 18 h287.5 a12 12 0 0 1 12 12 v39 a12 12 0 0 1 -12 12 h-130 l-12 9 a3.2 3.2 0 0 1 -4 0 l-12 -9 h-129.5 a12 12 0 0 1 -12 -12 v-39 a12 12 0 0 1 12 -12 z" fill="#fff" stroke="#DCD6E3" stroke-width="2"/></svg>
<div style="position:absolute;left:60px;top:1710px;width:2907px;height:2px;box-sizing:border-box;z-index:1;background:#E0DCE5;"></div>
<div style="position:absolute;left:61px;top:1706px;width:209px;height:6px;box-sizing:border-box;z-index:2;background:#6C5FC7;border-radius:3px;"></div>
<div style="position:absolute;left:60px;top:1744px;width:2907px;height:516px;box-sizing:border-box;z-index:1;background:#fff;border:2px solid #E0DCE5;border-radius:12px;overflow:hidden;"></div>
<div style="position:absolute;left:63px;top:1746px;width:2902px;height:90px;box-sizing:border-box;z-index:1;background:#FAF9FB;border-radius:10px 10px 0 0;"></div>
<div style="position:absolute;left:63px;top:1836px;width:2902px;height:2px;box-sizing:border-box;z-index:1;background:#E0DCE5;"></div>
<svg style="position:absolute;left:102px;top:1864.0px;z-index:3;" width="32" height="32" viewBox="0 0 32 32"><g transform="scale(1.0)"><rect x="0" y="0" width="32" height="32" rx="7" fill="#5A9ED4"/><path d="M12.2 3.1H19.5A2.6 2.6 0 0 1 22.1 5.7V13A2.4 2.4 0 0 1 19.7 15.4H12.2A3 3 0 0 0 9.2 18.4V22H6A2.9 2.9 0 0 1 3.1 19.1V12.7A2.9 2.9 0 0 1 6 9.8H16V9.3H9.6V5.7A2.6 2.6 0 0 1 12.2 3.1Z" fill="#fff"/><path d="M12.2 3.1H19.5A2.6 2.6 0 0 1 22.1 5.7V13A2.4 2.4 0 0 1 19.7 15.4H12.2A3 3 0 0 0 9.2 18.4V22H6A2.9 2.9 0 0 1 3.1 19.1V12.7A2.9 2.9 0 0 1 6 9.8H16V9.3H9.6V5.7A2.6 2.6 0 0 1 12.2 3.1Z" fill="#fff" transform="rotate(180 16 16)"/><circle cx="12.5" cy="6" r="1.2" fill="#5A9ED4"/><circle cx="19.5" cy="26" r="1.2" fill="#5A9ED4"/></g></svg>
<div style="position:absolute;left:174.6px;top:1892.0px;width:1097.7px;height:2.0px;box-sizing:border-box;z-index:2;background-image:linear-gradient(90deg,#7B6E8A 50%,transparent 50%);background-size:4px 2px;"></div>
<div style="position:absolute;left:2744px;top:1855.5px;width:58px;height:51.0px;box-sizing:border-box;z-index:2;background:#fff;border:2px solid #E0DCE5;border-radius:10px;"></div>
<svg style="position:absolute;left:2757px;top:1864.0px;z-index:3;" width="32" height="32" viewBox="0 0 32 32"><g fill="none" stroke="#A396B0" stroke-width="2.2" stroke-linejoin="round"><rect x="5" y="3" width="22" height="8.5" rx="0.8"/><path d="M8.2 11.5v6.5a0.8 0.8 0 0 0 .8.8h14a0.8 0.8 0 0 0 .8-.8v-6.5"/><path d="M11.8 18.8v6.4a.8.8 0 0 0 .8.8h6.8a.8.8 0 0 0 .8-.8v-6.4"/></g></svg>
<div style="position:absolute;left:63px;top:1923.1px;width:2902px;height:2.0px;box-sizing:border-box;z-index:1;background:#EDEAF0;"></div>
<svg style="position:absolute;left:102px;top:1950.1px;z-index:3;" width="32" height="32" viewBox="0 0 32 32"><g transform="scale(1.0)"><rect x="0" y="0" width="32" height="32" rx="7" fill="#5A9ED4"/><path d="M12.2 3.1H19.5A2.6 2.6 0 0 1 22.1 5.7V13A2.4 2.4 0 0 1 19.7 15.4H12.2A3 3 0 0 0 9.2 18.4V22H6A2.9 2.9 0 0 1 3.1 19.1V12.7A2.9 2.9 0 0 1 6 9.8H16V9.3H9.6V5.7A2.6 2.6 0 0 1 12.2 3.1Z" fill="#fff"/><path d="M12.2 3.1H19.5A2.6 2.6 0 0 1 22.1 5.7V13A2.4 2.4 0 0 1 19.7 15.4H12.2A3 3 0 0 0 9.2 18.4V22H6A2.9 2.9 0 0 1 3.1 19.1V12.7A2.9 2.9 0 0 1 6 9.8H16V9.3H9.6V5.7A2.6 2.6 0 0 1 12.2 3.1Z" fill="#fff" transform="rotate(180 16 16)"/><circle cx="12.5" cy="6" r="1.2" fill="#5A9ED4"/><circle cx="19.5" cy="26" r="1.2" fill="#5A9ED4"/></g></svg>
<div style="position:absolute;left:174.6px;top:1978.1px;width:744.0px;height:2.0px;box-sizing:border-box;z-index:2;background-image:linear-gradient(90deg,#7B6E8A 50%,transparent 50%);background-size:4px 2px;"></div>
<div style="position:absolute;left:2744px;top:1941.6px;width:58px;height:51.0px;box-sizing:border-box;z-index:2;background:#fff;border:2px solid #E0DCE5;border-radius:10px;"></div>
<svg style="position:absolute;left:2757px;top:1950.1px;z-index:3;" width="32" height="32" viewBox="0 0 32 32"><g fill="none" stroke="#A396B0" stroke-width="2.2" stroke-linejoin="round"><rect x="5" y="3" width="22" height="8.5" rx="0.8"/><path d="M8.2 11.5v6.5a0.8 0.8 0 0 0 .8.8h14a0.8 0.8 0 0 0 .8-.8v-6.5"/><path d="M11.8 18.8v6.4a.8.8 0 0 0 .8.8h6.8a.8.8 0 0 0 .8-.8v-6.4"/></g></svg>
<div style="position:absolute;left:63px;top:2009.2px;width:2902px;height:2.0px;box-sizing:border-box;z-index:1;background:#EDEAF0;"></div>
<svg style="position:absolute;left:102px;top:2036.1999999999998px;z-index:3;" width="32" height="32" viewBox="0 0 32 32"><g transform="scale(1.0)"><rect x="0" y="0" width="32" height="32" rx="7" fill="#5A9ED4"/><path d="M12.2 3.1H19.5A2.6 2.6 0 0 1 22.1 5.7V13A2.4 2.4 0 0 1 19.7 15.4H12.2A3 3 0 0 0 9.2 18.4V22H6A2.9 2.9 0 0 1 3.1 19.1V12.7A2.9 2.9 0 0 1 6 9.8H16V9.3H9.6V5.7A2.6 2.6 0 0 1 12.2 3.1Z" fill="#fff"/><path d="M12.2 3.1H19.5A2.6 2.6 0 0 1 22.1 5.7V13A2.4 2.4 0 0 1 19.7 15.4H12.2A3 3 0 0 0 9.2 18.4V22H6A2.9 2.9 0 0 1 3.1 19.1V12.7A2.9 2.9 0 0 1 6 9.8H16V9.3H9.6V5.7A2.6 2.6 0 0 1 12.2 3.1Z" fill="#fff" transform="rotate(180 16 16)"/><circle cx="12.5" cy="6" r="1.2" fill="#5A9ED4"/><circle cx="19.5" cy="26" r="1.2" fill="#5A9ED4"/></g></svg>
<div style="position:absolute;left:174.6px;top:2064.2px;width:845.7px;height:2.0px;box-sizing:border-box;z-index:2;background-image:linear-gradient(90deg,#7B6E8A 50%,transparent 50%);background-size:4px 2px;"></div>
<div style="position:absolute;left:2744px;top:2027.6999999999998px;width:58px;height:51.0px;box-sizing:border-box;z-index:2;background:#fff;border:2px solid #E0DCE5;border-radius:10px;"></div>
<svg style="position:absolute;left:2757px;top:2036.1999999999998px;z-index:3;" width="32" height="32" viewBox="0 0 32 32"><g fill="none" stroke="#A396B0" stroke-width="2.2" stroke-linejoin="round"><rect x="5" y="3" width="22" height="8.5" rx="0.8"/><path d="M8.2 11.5v6.5a0.8 0.8 0 0 0 .8.8h14a0.8 0.8 0 0 0 .8-.8v-6.5"/><path d="M11.8 18.8v6.4a.8.8 0 0 0 .8.8h6.8a.8.8 0 0 0 .8-.8v-6.4"/></g></svg>
<div style="position:absolute;left:63px;top:2095.3px;width:2902px;height:2.0px;box-sizing:border-box;z-index:1;background:#EDEAF0;"></div>
<svg style="position:absolute;left:102px;top:2122.3px;z-index:3;" width="32" height="32" viewBox="0 0 32 32"><g transform="scale(1.0)"><rect x="0" y="0" width="32" height="32" rx="7" fill="#5A9ED4"/><path d="M12.2 3.1H19.5A2.6 2.6 0 0 1 22.1 5.7V13A2.4 2.4 0 0 1 19.7 15.4H12.2A3 3 0 0 0 9.2 18.4V22H6A2.9 2.9 0 0 1 3.1 19.1V12.7A2.9 2.9 0 0 1 6 9.8H16V9.3H9.6V5.7A2.6 2.6 0 0 1 12.2 3.1Z" fill="#fff"/><path d="M12.2 3.1H19.5A2.6 2.6 0 0 1 22.1 5.7V13A2.4 2.4 0 0 1 19.7 15.4H12.2A3 3 0 0 0 9.2 18.4V22H6A2.9 2.9 0 0 1 3.1 19.1V12.7A2.9 2.9 0 0 1 6 9.8H16V9.3H9.6V5.7A2.6 2.6 0 0 1 12.2 3.1Z" fill="#fff" transform="rotate(180 16 16)"/><circle cx="12.5" cy="6" r="1.2" fill="#5A9ED4"/><circle cx="19.5" cy="26" r="1.2" fill="#5A9ED4"/></g></svg>
<div style="position:absolute;left:174.6px;top:2150.3px;width:673.5px;height:2.0px;box-sizing:border-box;z-index:2;background-image:linear-gradient(90deg,#7B6E8A 50%,transparent 50%);background-size:4px 2px;"></div>
<div style="position:absolute;left:2744px;top:2113.8px;width:58px;height:51.0px;box-sizing:border-box;z-index:2;background:#fff;border:2px solid #E0DCE5;border-radius:10px;"></div>
<svg style="position:absolute;left:2757px;top:2122.3px;z-index:3;" width="32" height="32" viewBox="0 0 32 32"><g fill="none" stroke="#A396B0" stroke-width="2.2" stroke-linejoin="round"><rect x="5" y="3" width="22" height="8.5" rx="0.8"/><path d="M8.2 11.5v6.5a0.8 0.8 0 0 0 .8.8h14a0.8 0.8 0 0 0 .8-.8v-6.5"/><path d="M11.8 18.8v6.4a.8.8 0 0 0 .8.8h6.8a.8.8 0 0 0 .8-.8v-6.4"/></g></svg>
<div style="position:absolute;z-index:2;left:61.68px;top:45.81px;font:700 52px/52px 'Liberation Sans',sans-serif;color:#2B2233;letter-spacing:0.094px;white-space:pre;">Metrics</div>
<div style="position:absolute;z-index:2;left:327.09px;top:65.61px;font:400 22px/22px 'Liberation Sans',sans-serif;color:#FFFFFF;letter-spacing:0.999px;white-space:pre;-webkit-text-stroke:0.25px #FFFFFF;">beta</div>
<div style="position:absolute;z-index:2;left:1947.42px;top:54.85px;font:700 28px/28px 'Liberation Sans',sans-serif;color:#FFFFFF;letter-spacing:0.123px;white-space:pre;">Set Up Custom Metrics</div>
<div style="position:absolute;z-index:2;left:2368.42px;top:54.85px;font:700 28px/28px 'Liberation Sans',sans-serif;color:#3E3446;letter-spacing:0.220px;white-space:pre;">Save as default</div>
<div style="position:absolute;z-index:2;left:2687.02px;top:54.85px;font:700 28px/28px 'Liberation Sans',sans-serif;color:#3E3446;letter-spacing:0.523px;white-space:pre;">Create Alert</div>
<div style="position:absolute;z-index:2;left:141.72px;top:210.85px;font:700 28px/28px 'Liberation Sans',sans-serif;color:#3E3446;letter-spacing:0.983px;white-space:pre;">sentry</div>
<div style="position:absolute;z-index:2;left:377.82px;top:210.85px;font:700 28px/28px 'Liberation Sans',sans-serif;color:#3E3446;letter-spacing:-0.646px;white-space:pre;">All Envs</div>
<div style="position:absolute;z-index:2;left:630.52px;top:210.85px;font:700 28px/28px 'Liberation Sans',sans-serif;color:#3E3446;letter-spacing:0.163px;white-space:pre;">7D</div>
<div style="position:absolute;z-index:2;left:69.88px;top:319.81px;font:400 22px/22px 'Liberation Sans',sans-serif;color:#1D1127;letter-spacing:0.000px;white-space:pre;-webkit-text-stroke:0.25px #1D1127;">a</div>
<div style="position:absolute;z-index:2;left:141.62px;top:318.25px;font:700 28px/28px 'Liberation Sans',sans-serif;color:#3E3446;letter-spacing:0.652px;white-space:pre;">sentry.event_manager.save</div>
<div style="position:absolute;z-index:2;left:641.52px;top:318.25px;font:700 28px/28px 'Liberation Sans',sans-serif;color:#3E3446;letter-spacing:-1.680px;white-space:pre;">Op:</div>
<div style="position:absolute;z-index:2;left:697.72px;top:318.25px;font:400 28px/28px 'Liberation Sans',sans-serif;color:#3E3446;letter-spacing:1.052px;white-space:pre;-webkit-text-stroke:0.25px #3E3446;">avg</div>
<div style="position:absolute;z-index:2;left:897.42px;top:318.25px;font:700 28px/28px 'Liberation Sans',sans-serif;color:#3E3446;letter-spacing:-0.651px;white-space:pre;">Group by:</div>
<div style="position:absolute;z-index:2;left:1038.02px;top:318.25px;font:400 28px/28px 'Liberation Sans',sans-serif;color:#3E3446;letter-spacing:1.449px;white-space:pre;-webkit-text-stroke:0.25px #3E3446;">consumer_group</div>
<div style="position:absolute;z-index:2;left:1415.16px;top:324.15px;font:400 24px/24px 'Liberation Mono',monospace;color:#80708F;letter-spacing:-0.074px;white-space:pre;-webkit-text-stroke:0.25px #80708F;">Filter by tags</div>
<div style="position:absolute;z-index:2;left:70.38px;top:411.81px;font:400 22px/22px 'Liberation Sans',sans-serif;color:#FFFFFF;letter-spacing:0.000px;white-space:pre;-webkit-text-stroke:0.25px #FFFFFF;">b</div>
<div style="position:absolute;z-index:2;left:141.62px;top:410.25px;font:700 28px/28px 'Liberation Sans',sans-serif;color:#3E3446;letter-spacing:0.508px;white-space:pre;">transaction.duration</div>
<div style="position:absolute;z-index:2;left:557.62px;top:410.25px;font:700 28px/28px 'Liberation Sans',sans-serif;color:#3E3446;letter-spacing:-1.680px;white-space:pre;">Op:</div>
<div style="position:absolute;z-index:2;left:614.02px;top:410.25px;font:400 28px/28px 'Liberation Sans',sans-serif;color:#3E3446;letter-spacing:2.115px;white-space:pre;-webkit-text-stroke:0.25px #3E3446;">count</div>
<div style="position:absolute;z-index:2;left:814.02px;top:410.25px;font:700 28px/28px 'Liberation Sans',sans-serif;color:#3E3446;letter-spacing:-0.601px;white-space:pre;">Group by:</div>
<div style="position:absolute;z-index:2;left:955.02px;top:410.25px;font:400 28px/28px 'Liberation Sans',sans-serif;color:#3E3446;letter-spacing:1.565px;white-space:pre;-webkit-text-stroke:0.25px #3E3446;">http.status_code</div>
<div style="position:absolute;z-index:2;left:1333.16px;top:415.85px;font:400 24px/24px 'Liberation Mono',monospace;color:#80708F;letter-spacing:-0.074px;white-space:pre;-webkit-text-stroke:0.25px #80708F;">Filter by tags</div>
<div style="position:absolute;z-index:2;left:178.02px;top:513.35px;font:700 28px/28px 'Liberation Sans',sans-serif;color:#3E3446;letter-spacing:0.061px;white-space:pre;">Add query</div>
<div style="position:absolute;z-index:2;left:444.52px;top:513.35px;font:700 28px/28px 'Liberation Sans',sans-serif;color:#3E3446;letter-spacing:0.053px;white-space:pre;">Add equation</div>
<div style="position:absolute;z-index:2;left:682.02px;top:513.35px;font:700 28px/28px 'Liberation Sans',sans-serif;color:#3E3446;letter-spacing:0.159px;white-space:pre;">One chart per query</div>
<div style="position:absolute;z-index:2;left:103.88px;top:631.81px;font:400 22px/22px 'Liberation Sans',sans-serif;color:#1D1127;letter-spacing:0.000px;white-space:pre;-webkit-text-stroke:0.25px #1D1127;">a</div>
<div style="position:absolute;z-index:2;left:141.62px;top:627.85px;font:400 28px/28px 'Liberation Sans',sans-serif;color:#3E3446;letter-spacing:0.872px;white-space:pre;-webkit-text-stroke:0.25px #3E3446;">avg(sentry.event_manager.save) by consumer_group</div>
<div style="position:absolute;z-index:2;left:1259.16px;top:630.16px;font:700 24px/24px 'Liberation Sans',sans-serif;color:#3E3446;letter-spacing:-0.385px;white-space:pre;">Display:</div>
<div style="position:absolute;z-index:2;left:1362.66px;top:630.16px;font:400 24px/24px 'Liberation Sans',sans-serif;color:#3E3446;letter-spacing:0.602px;white-space:pre;-webkit-text-stroke:0.25px #3E3446;">Line</div>
<div style="position:absolute;z-index:2;left:94.71px;top:698.16px;font:400 24px/24px 'Liberation Sans',sans-serif;color:#80708F;letter-spacing:1.261px;white-space:pre;-webkit-text-stroke:0.25px #80708F;">250ms</div>
<div style="position:absolute;z-index:2;left:94.71px;top:766.56px;font:400 24px/24px 'Liberation Sans',sans-serif;color:#80708F;letter-spacing:1.261px;white-space:pre;-webkit-text-stroke:0.25px #80708F;">200ms</div>
<div style="position:absolute;z-index:2;left:94.71px;top:834.96px;font:400 24px/24px 'Liberation Sans',sans-serif;color:#80708F;letter-spacing:1.261px;white-space:pre;-webkit-text-stroke:0.25px #80708F;">150ms</div>
<div style="position:absolute;z-index:2;left:94.71px;top:903.36px;font:400 24px/24px 'Liberation Sans',sans-serif;color:#80708F;letter-spacing:1.261px;white-space:pre;-webkit-text-stroke:0.25px #80708F;">100ms</div>
<div style="position:absolute;z-index:2;left:109.00px;top:971.76px;font:400 24px/24px 'Liberation Sans',sans-serif;color:#80708F;letter-spacing:1.369px;white-space:pre;-webkit-text-stroke:0.25px #80708F;">50ms</div>
<div style="position:absolute;z-index:2;left:123.28px;top:1040.16px;font:400 24px/24px 'Liberation Sans',sans-serif;color:#80708F;letter-spacing:1.587px;white-space:pre;-webkit-text-stroke:0.25px #80708F;">0ms</div>
<div style="position:absolute;z-index:2;left:196.86px;top:1074.86px;font:400 24px/24px 'Liberation Sans',sans-serif;color:#80708F;letter-spacing:-0.178px;white-space:pre;-webkit-text-stroke:0.25px #80708F;">Mar 13 12:00 AM</div>
<div style="position:absolute;z-index:2;left:560.86px;top:1074.86px;font:400 24px/24px 'Liberation Sans',sans-serif;color:#80708F;letter-spacing:-0.178px;white-space:pre;-webkit-text-stroke:0.25px #80708F;">Mar 15 12:00 AM</div>
<div style="position:absolute;z-index:2;left:926.26px;top:1074.86px;font:400 24px/24px 'Liberation Sans',sans-serif;color:#80708F;letter-spacing:-0.178px;white-space:pre;-webkit-text-stroke:0.25px #80708F;">Mar 17 12:00 AM</div>
<div style="position:absolute;z-index:2;left:1290.36px;top:1074.86px;font:400 24px/24px 'Liberation Sans',sans-serif;color:#80708F;letter-spacing:-0.178px;white-space:pre;-webkit-text-stroke:0.25px #80708F;">Mar 19 12:00 AM</div>
<div style="position:absolute;z-index:2;left:160.16px;top:1150.66px;font:700 24px/24px 'Liberation Sans',sans-serif;color:#80708F;letter-spacing:-0.664px;white-space:pre;">NAME</div>
<div style="position:absolute;z-index:2;left:963.96px;top:1150.66px;font:700 24px/24px 'Liberation Sans',sans-serif;color:#80708F;letter-spacing:-1.277px;white-space:pre;">AVG</div>
<div style="position:absolute;z-index:2;left:1089.46px;top:1150.66px;font:700 24px/24px 'Liberation Sans',sans-serif;color:#80708F;letter-spacing:0.340px;white-space:pre;">MIN</div>
<div style="position:absolute;z-index:2;left:1218.46px;top:1150.66px;font:700 24px/24px 'Liberation Sans',sans-serif;color:#80708F;letter-spacing:0.168px;white-space:pre;">MAX</div>
<div style="position:absolute;z-index:2;left:1323.38px;top:1150.66px;font:700 24px/24px 'Liberation Sans',sans-serif;color:#80708F;letter-spacing:-1.440px;white-space:pre;">SUM</div>
<div style="position:absolute;z-index:2;left:159.56px;top:1198.66px;font:400 24px/24px 'Liberation Sans',sans-serif;color:#3E3446;letter-spacing:-0.339px;white-space:pre;-webkit-text-stroke:0.25px #3E3446;">(none)</div>
<div style="position:absolute;z-index:2;left:897.96px;top:1198.66px;font:400 24px/24px 'Liberation Sans',sans-serif;color:#3E3446;letter-spacing:1.182px;white-space:pre;-webkit-text-stroke:0.25px #3E3446;">129.46ms</div>
<div style="position:absolute;z-index:2;left:1035.46px;top:1198.66px;font:400 24px/24px 'Liberation Sans',sans-serif;color:#3E3446;letter-spacing:1.103px;white-space:pre;-webkit-text-stroke:0.25px #3E3446;">69.55ms</div>
<div style="position:absolute;z-index:2;left:1158.46px;top:1198.66px;font:400 24px/24px 'Liberation Sans',sans-serif;color:#3E3446;letter-spacing:1.182px;white-space:pre;-webkit-text-stroke:0.25px #3E3446;">227.03ms</div>
<div style="position:absolute;z-index:2;left:1296.16px;top:1198.66px;font:400 24px/24px 'Liberation Sans',sans-serif;color:#3E3446;letter-spacing:1.124px;white-space:pre;-webkit-text-stroke:0.25px #3E3446;">43.63s</div>
<div style="position:absolute;z-index:2;left:159.56px;top:1251.06px;font:400 24px/24px 'Liberation Sans',sans-serif;color:#3E3446;letter-spacing:1.241px;white-space:pre;-webkit-text-stroke:0.25px #3E3446;">ingest-occurrences-0</div>
<div style="position:absolute;z-index:2;left:912.96px;top:1251.06px;font:400 24px/24px 'Liberation Sans',sans-serif;color:#3E3446;letter-spacing:1.103px;white-space:pre;-webkit-text-stroke:0.25px #3E3446;">72.23ms</div>
<div style="position:absolute;z-index:2;left:1035.46px;top:1251.06px;font:400 24px/24px 'Liberation Sans',sans-serif;color:#3E3446;letter-spacing:1.103px;white-space:pre;-webkit-text-stroke:0.25px #3E3446;">15.84ms</div>
<div style="position:absolute;z-index:2;left:1158.46px;top:1251.06px;font:400 24px/24px 'Liberation Sans',sans-serif;color:#3E3446;letter-spacing:1.182px;white-space:pre;-webkit-text-stroke:0.25px #3E3446;">231.85ms</div>
<div style="position:absolute;z-index:2;left:1296.16px;top:1251.06px;font:400 24px/24px 'Liberation Sans',sans-serif;color:#3E3446;letter-spacing:1.124px;white-space:pre;-webkit-text-stroke:0.25px #3E3446;">24.34s</div>
<div style="position:absolute;z-index:2;left:1574.38px;top:631.81px;font:400 22px/22px 'Liberation Sans',sans-serif;color:#FFFFFF;letter-spacing:0.000px;white-space:pre;-webkit-text-stroke:0.25px #FFFFFF;">b</div>
<div style="position:absolute;z-index:2;left:1612.32px;top:627.85px;font:400 28px/28px 'Liberation Sans',sans-serif;color:#3E3446;letter-spacing:1.071px;white-space:pre;-webkit-text-stroke:0.25px #3E3446;">count(transaction.duration) by http.status_code</div>
<div style="position:absolute;z-index:2;left:2725.66px;top:630.16px;font:700 24px/24px 'Liberation Sans',sans-serif;color:#3E3446;letter-spacing:-0.385px;white-space:pre;">Display:</div>
<div style="position:absolute;z-index:2;left:2827.86px;top:630.16px;font:400 24px/24px 'Liberation Sans',sans-serif;color:#3E3446;letter-spacing:0.326px;white-space:pre;-webkit-text-stroke:0.25px #3E3446;">Area</div>
<div style="position:absolute;z-index:2;left:1565.76px;top:697.16px;font:400 24px/24px 'Liberation Sans',sans-serif;color:#80708F;letter-spacing:1.028px;white-space:pre;-webkit-text-stroke:0.25px #80708F;">70,000</div>
<div style="position:absolute;z-index:2;left:1565.76px;top:746.14px;font:400 24px/24px 'Liberation Sans',sans-serif;color:#80708F;letter-spacing:1.028px;white-space:pre;-webkit-text-stroke:0.25px #80708F;">60,000</div>
<div style="position:absolute;z-index:2;left:1565.76px;top:795.13px;font:400 24px/24px 'Liberation Sans',sans-serif;color:#80708F;letter-spacing:1.028px;white-space:pre;-webkit-text-stroke:0.25px #80708F;">50,000</div>
<div style="position:absolute;z-index:2;left:1565.76px;top:844.12px;font:400 24px/24px 'Liberation Sans',sans-serif;color:#80708F;letter-spacing:1.028px;white-space:pre;-webkit-text-stroke:0.25px #80708F;">40,000</div>
<div style="position:absolute;z-index:2;left:1565.76px;top:893.10px;font:400 24px/24px 'Liberation Sans',sans-serif;color:#80708F;letter-spacing:1.028px;white-space:pre;-webkit-text-stroke:0.25px #80708F;">30,000</div>
<div style="position:absolute;z-index:2;left:1565.76px;top:942.09px;font:400 24px/24px 'Liberation Sans',sans-serif;color:#80708F;letter-spacing:1.028px;white-space:pre;-webkit-text-stroke:0.25px #80708F;">20,000</div>
<div style="position:absolute;z-index:2;left:1565.76px;top:991.07px;font:400 24px/24px 'Liberation Sans',sans-serif;color:#80708F;letter-spacing:1.028px;white-space:pre;-webkit-text-stroke:0.25px #80708F;">10,000</div>
<div style="position:absolute;z-index:2;left:1630.94px;top:1040.06px;font:400 24px/24px 'Liberation Sans',sans-serif;color:#80708F;letter-spacing:0.000px;white-space:pre;-webkit-text-stroke:0.25px #80708F;">0</div>
<div style="position:absolute;z-index:2;left:1670.36px;top:1074.86px;font:400 24px/24px 'Liberation Sans',sans-serif;color:#80708F;letter-spacing:-0.178px;white-space:pre;-webkit-text-stroke:0.25px #80708F;">Mar 13 12:00 AM</div>
<div style="position:absolute;z-index:2;left:2032.26px;top:1074.86px;font:400 24px/24px 'Liberation Sans',sans-serif;color:#80708F;letter-spacing:-0.178px;white-space:pre;-webkit-text-stroke:0.25px #80708F;">Mar 15 12:00 AM</div>
<div style="position:absolute;z-index:2;left:2396.66px;top:1074.86px;font:400 24px/24px 'Liberation Sans',sans-serif;color:#80708F;letter-spacing:-0.178px;white-space:pre;-webkit-text-stroke:0.25px #80708F;">Mar 17 12:00 AM</div>
<div style="position:absolute;z-index:2;left:2760.46px;top:1074.86px;font:400 24px/24px 'Liberation Sans',sans-serif;color:#80708F;letter-spacing:-0.178px;white-space:pre;-webkit-text-stroke:0.25px #80708F;">Mar 19 12:00 AM</div>
<div style="position:absolute;z-index:2;left:1629.96px;top:1150.66px;font:700 24px/24px 'Liberation Sans',sans-serif;color:#80708F;letter-spacing:-0.664px;white-space:pre;">NAME</div>
<div style="position:absolute;z-index:2;left:2281.66px;top:1150.66px;font:700 24px/24px 'Liberation Sans',sans-serif;color:#80708F;letter-spacing:-1.277px;white-space:pre;">AVG</div>
<div style="position:absolute;z-index:2;left:2423.56px;top:1150.66px;font:700 24px/24px 'Liberation Sans',sans-serif;color:#80708F;letter-spacing:0.340px;white-space:pre;">MIN</div>
<div style="position:absolute;z-index:2;left:2570.16px;top:1150.66px;font:700 24px/24px 'Liberation Sans',sans-serif;color:#80708F;letter-spacing:0.168px;white-space:pre;">MAX</div>
<div style="position:absolute;z-index:2;left:2763.38px;top:1150.66px;font:700 24px/24px 'Liberation Sans',sans-serif;color:#80708F;letter-spacing:-1.440px;white-space:pre;">SUM</div>
<div style="position:absolute;z-index:2;left:2242.82px;top:1197.06px;font:400 24px/24px 'Liberation Sans',sans-serif;color:#3E3446;letter-spacing:0.934px;white-space:pre;-webkit-text-stroke:0.25px #3E3446;">3,723.7</div>
<div style="position:absolute;z-index:2;left:2454.04px;top:1197.06px;font:400 24px/24px 'Liberation Sans',sans-serif;color:#3E3446;letter-spacing:0.000px;white-space:pre;-webkit-text-stroke:0.25px #3E3446;">1</div>
<div style="position:absolute;z-index:2;left:2544.46px;top:1197.06px;font:400 24px/24px 'Liberation Sans',sans-serif;color:#3E3446;letter-spacing:1.028px;white-space:pre;-webkit-text-stroke:0.25px #3E3446;">80,032</div>
<div style="position:absolute;z-index:2;left:2698.74px;top:1197.06px;font:400 24px/24px 'Liberation Sans',sans-serif;color:#3E3446;letter-spacing:0.934px;white-space:pre;-webkit-text-stroke:0.25px #3E3446;">1,254,887</div>
<div style="position:absolute;z-index:2;left:1630.80px;top:1248.81px;font:400 24px/24px 'Liberation Sans',sans-serif;color:#3E3446;letter-spacing:1.402px;white-space:pre;-webkit-text-stroke:0.25px #3E3446;">405</div>
<div style="position:absolute;z-index:2;left:2214.24px;top:1248.81px;font:400 24px/24px 'Liberation Sans',sans-serif;color:#3E3446;letter-spacing:0.934px;white-space:pre;-webkit-text-stroke:0.25px #3E3446;">1,704.496</div>
<div style="position:absolute;z-index:2;left:2424.55px;top:1248.81px;font:400 24px/24px 'Liberation Sans',sans-serif;color:#3E3446;letter-spacing:1.402px;white-space:pre;-webkit-text-stroke:0.25px #3E3446;">886</div>
<div style="position:absolute;z-index:2;left:2558.73px;top:1248.81px;font:400 24px/24px 'Liberation Sans',sans-serif;color:#3E3446;letter-spacing:1.051px;white-space:pre;-webkit-text-stroke:0.25px #3E3446;">2,249</div>
<div style="position:absolute;z-index:2;left:2720.16px;top:1248.81px;font:400 24px/24px 'Liberation Sans',sans-serif;color:#3E3446;letter-spacing:1.012px;white-space:pre;-webkit-text-stroke:0.25px #3E3446;">574,415</div>
<div style="position:absolute;z-index:2;left:1630.80px;top:1300.56px;font:400 24px/24px 'Liberation Sans',sans-serif;color:#3E3446;letter-spacing:1.402px;white-space:pre;-webkit-text-stroke:0.25px #3E3446;">500</div>
<div style="position:absolute;z-index:2;left:2235.66px;top:1300.56px;font:400 24px/24px 'Liberation Sans',sans-serif;color:#3E3446;letter-spacing:1.012px;white-space:pre;-webkit-text-stroke:0.25px #3E3446;">187.496</div>
<div style="position:absolute;z-index:2;left:2454.04px;top:1300.56px;font:400 24px/24px 'Liberation Sans',sans-serif;color:#3E3446;letter-spacing:0.000px;white-space:pre;-webkit-text-stroke:0.25px #3E3446;">9</div>
<div style="position:absolute;z-index:2;left:2558.73px;top:1300.56px;font:400 24px/24px 'Liberation Sans',sans-serif;color:#3E3446;letter-spacing:1.051px;white-space:pre;-webkit-text-stroke:0.25px #3E3446;">1,254</div>
<div style="position:absolute;z-index:2;left:2734.46px;top:1300.56px;font:400 24px/24px 'Liberation Sans',sans-serif;color:#3E3446;letter-spacing:1.028px;white-space:pre;-webkit-text-stroke:0.25px #3E3446;">63,186</div>
<div style="position:absolute;z-index:2;left:1630.80px;top:1352.31px;font:400 24px/24px 'Liberation Sans',sans-serif;color:#3E3446;letter-spacing:1.402px;white-space:pre;-webkit-text-stroke:0.25px #3E3446;">504</div>
<div style="position:absolute;z-index:2;left:2249.96px;top:1352.31px;font:400 24px/24px 'Liberation Sans',sans-serif;color:#3E3446;letter-spacing:1.028px;white-space:pre;-webkit-text-stroke:0.25px #3E3446;">33.789</div>
<div style="position:absolute;z-index:2;left:2454.04px;top:1352.31px;font:400 24px/24px 'Liberation Sans',sans-serif;color:#3E3446;letter-spacing:0.000px;white-space:pre;-webkit-text-stroke:0.25px #3E3446;">9</div>
<div style="position:absolute;z-index:2;left:2580.15px;top:1352.31px;font:400 24px/24px 'Liberation Sans',sans-serif;color:#3E3446;letter-spacing:1.402px;white-space:pre;-webkit-text-stroke:0.25px #3E3446;">403</div>
<div style="position:absolute;z-index:2;left:2736.36px;top:1352.31px;font:400 24px/24px 'Liberation Sans',sans-serif;color:#3E3446;letter-spacing:1.003px;white-space:pre;-webkit-text-stroke:0.25px #3E3446;">11,387</div>
<div style="position:absolute;z-index:2;left:1630.80px;top:1404.06px;font:400 24px/24px 'Liberation Sans',sans-serif;color:#3E3446;letter-spacing:1.402px;white-space:pre;-webkit-text-stroke:0.25px #3E3446;">422</div>
<div style="position:absolute;z-index:2;left:2249.96px;top:1404.06px;font:400 24px/24px 'Liberation Sans',sans-serif;color:#3E3446;letter-spacing:1.028px;white-space:pre;-webkit-text-stroke:0.25px #3E3446;">18.136</div>
<div style="position:absolute;z-index:2;left:2454.04px;top:1404.06px;font:400 24px/24px 'Liberation Sans',sans-serif;color:#3E3446;letter-spacing:0.000px;white-space:pre;-webkit-text-stroke:0.25px #3E3446;">1</div>
<div style="position:absolute;z-index:2;left:2580.15px;top:1404.06px;font:400 24px/24px 'Liberation Sans',sans-serif;color:#3E3446;letter-spacing:1.402px;white-space:pre;-webkit-text-stroke:0.25px #3E3446;">149</div>
<div style="position:absolute;z-index:2;left:2748.73px;top:1404.06px;font:400 24px/24px 'Liberation Sans',sans-serif;color:#3E3446;letter-spacing:1.051px;white-space:pre;-webkit-text-stroke:0.25px #3E3446;">2,938</div>
<div style="position:absolute;z-index:2;left:1630.80px;top:1455.81px;font:400 24px/24px 'Liberation Sans',sans-serif;color:#3E3446;letter-spacing:1.402px;white-space:pre;-webkit-text-stroke:0.25px #3E3446;">301</div>
<div style="position:absolute;z-index:2;left:2264.23px;top:1455.81px;font:400 24px/24px 'Liberation Sans',sans-serif;color:#3E3446;letter-spacing:1.051px;white-space:pre;-webkit-text-stroke:0.25px #3E3446;">4.769</div>
<div style="position:absolute;z-index:2;left:2454.04px;top:1455.81px;font:400 24px/24px 'Liberation Sans',sans-serif;color:#3E3446;letter-spacing:0.000px;white-space:pre;-webkit-text-stroke:0.25px #3E3446;">1</div>
<div style="position:absolute;z-index:2;left:2594.43px;top:1455.81px;font:400 24px/24px 'Liberation Sans',sans-serif;color:#3E3446;letter-spacing:1.869px;white-space:pre;-webkit-text-stroke:0.25px #3E3446;">29</div>
<div style="position:absolute;z-index:2;left:2748.73px;top:1455.81px;font:400 24px/24px 'Liberation Sans',sans-serif;color:#3E3446;letter-spacing:1.051px;white-space:pre;-webkit-text-stroke:0.25px #3E3446;">1,588</div>
<div style="position:absolute;z-index:2;left:1630.80px;top:1507.56px;font:400 24px/24px 'Liberation Sans',sans-serif;color:#3E3446;letter-spacing:1.402px;white-space:pre;-webkit-text-stroke:0.25px #3E3446;">502</div>
<div style="position:absolute;z-index:2;left:2264.23px;top:1507.56px;font:400 24px/24px 'Liberation Sans',sans-serif;color:#3E3446;letter-spacing:1.051px;white-space:pre;-webkit-text-stroke:0.25px #3E3446;">6.904</div>
<div style="position:absolute;z-index:2;left:2454.04px;top:1507.56px;font:400 24px/24px 'Liberation Sans',sans-serif;color:#3E3446;letter-spacing:0.000px;white-space:pre;-webkit-text-stroke:0.25px #3E3446;">1</div>
<div style="position:absolute;z-index:2;left:2594.43px;top:1507.56px;font:400 24px/24px 'Liberation Sans',sans-serif;color:#3E3446;letter-spacing:1.869px;white-space:pre;-webkit-text-stroke:0.25px #3E3446;">34</div>
<div style="position:absolute;z-index:2;left:2770.15px;top:1507.56px;font:400 24px/24px 'Liberation Sans',sans-serif;color:#3E3446;letter-spacing:1.402px;white-space:pre;-webkit-text-stroke:0.25px #3E3446;">863</div>
<div style="position:absolute;z-index:9;left:1521.16px;top:1187.16px;font:700 24px/24px 'Liberation Sans',sans-serif;color:#3E3446;letter-spacing:0.729px;white-space:pre;">http.status_code:</div>
<div style="position:absolute;z-index:9;left:1739.00px;top:1187.16px;font:400 24px/24px 'Liberation Sans',sans-serif;color:#3E3446;letter-spacing:1.402px;white-space:pre;-webkit-text-stroke:0.25px #3E3446;">405</div>
<div style="position:absolute;z-index:2;left:59.72px;top:1654.85px;font:400 28px/28px 'Liberation Sans',sans-serif;color:#6C5FC7;letter-spacing:0.467px;white-space:pre;-webkit-text-stroke:0.25px #6C5FC7;">Sampled Events</div>
<div style="position:absolute;z-index:2;left:301.32px;top:1654.85px;font:400 28px/28px 'Liberation Sans',sans-serif;color:#80708F;letter-spacing:0.532px;white-space:pre;-webkit-text-stroke:0.25px #80708F;">Code Location</div>
<div style="position:absolute;z-index:2;left:175.86px;top:1779.66px;font:700 24px/24px 'Liberation Sans',sans-serif;color:#80708F;letter-spacing:-0.584px;white-space:pre;">DESCRIPTION</div>
<div style="position:absolute;z-index:2;left:1620.56px;top:1779.66px;font:700 24px/24px 'Liberation Sans',sans-serif;color:#80708F;letter-spacing:-0.778px;white-space:pre;">OPERATION</div>
<div style="position:absolute;z-index:2;left:2016.76px;top:1779.66px;font:700 24px/24px 'Liberation Sans',sans-serif;color:#80708F;letter-spacing:-0.599px;white-space:pre;">DURATION</div>
<div style="position:absolute;z-index:2;left:2205.56px;top:1779.66px;font:700 24px/24px 'Liberation Sans',sans-serif;color:#80708F;letter-spacing:-0.358px;white-space:pre;">TIMESTAMP</div>
<div style="position:absolute;z-index:2;left:2745.16px;top:1779.66px;font:700 24px/24px 'Liberation Sans',sans-serif;color:#80708F;letter-spacing:-0.889px;white-space:pre;">PROFILE</div>
<div style="position:absolute;z-index:2;left:173.62px;top:1866.45px;font:400 28px/28px 'Liberation Sans',sans-serif;color:#2562D4;letter-spacing:1.414px;white-space:pre;-webkit-text-stroke:0.25px #2562D4;">/api/0/projects/{organization_slug}/{project_slug}/files/proguard-artifact-releases</div>
<div style="position:absolute;z-index:2;left:1618.52px;top:1866.45px;font:400 28px/28px 'Liberation Sans',sans-serif;color:#3E3446;letter-spacing:1.268px;white-space:pre;-webkit-text-stroke:0.25px #3E3446;">http.server</div>
<div style="position:absolute;z-index:2;left:2006.52px;top:1866.45px;font:400 28px/28px 'Liberation Sans',sans-serif;color:#3E3446;letter-spacing:1.427px;white-space:pre;-webkit-text-stroke:0.25px #3E3446;">122.00ms</div>
<div style="position:absolute;z-index:2;left:2203.52px;top:1866.45px;font:400 28px/28px 'Liberation Sans',sans-serif;color:#80708F;letter-spacing:0.220px;white-space:pre;-webkit-text-stroke:0.25px #80708F;">Mar 15, 2024 4:31:39 PM CET</div>
<div style="position:absolute;z-index:2;left:173.62px;top:1952.55px;font:400 28px/28px 'Liberation Sans',sans-serif;color:#2562D4;letter-spacing:1.535px;white-space:pre;-webkit-text-stroke:0.25px #2562D4;">/api/0/organizations/{organization_slug}/metrics/meta/</div>
<div style="position:absolute;z-index:2;left:1618.52px;top:1952.55px;font:400 28px/28px 'Liberation Sans',sans-serif;color:#3E3446;letter-spacing:1.268px;white-space:pre;-webkit-text-stroke:0.25px #3E3446;">http.server</div>
<div style="position:absolute;z-index:2;left:2006.52px;top:1952.55px;font:400 28px/28px 'Liberation Sans',sans-serif;color:#3E3446;letter-spacing:1.427px;white-space:pre;-webkit-text-stroke:0.25px #3E3446;">262.00ms</div>
<div style="position:absolute;z-index:2;left:2203.52px;top:1952.55px;font:400 28px/28px 'Liberation Sans',sans-serif;color:#80708F;letter-spacing:0.220px;white-space:pre;-webkit-text-stroke:0.25px #80708F;">Mar 12, 2024 9:48:29 PM CET</div>
<div style="position:absolute;z-index:2;left:173.62px;top:2038.65px;font:400 28px/28px 'Liberation Sans',sans-serif;color:#2562D4;letter-spacing:1.546px;white-space:pre;-webkit-text-stroke:0.25px #2562D4;">/api/0/projects/{organization_slug}/{project_slug}/files/dsyms/</div>
<div style="position:absolute;z-index:2;left:1618.52px;top:2038.65px;font:400 28px/28px 'Liberation Sans',sans-serif;color:#3E3446;letter-spacing:1.268px;white-space:pre;-webkit-text-stroke:0.25px #3E3446;">http.server</div>
<div style="position:absolute;z-index:2;left:2066.52px;top:2038.65px;font:400 28px/28px 'Liberation Sans',sans-serif;color:#3E3446;letter-spacing:1.115px;white-space:pre;-webkit-text-stroke:0.25px #3E3446;">1.64s</div>
<div style="position:absolute;z-index:2;left:2203.52px;top:2038.65px;font:400 28px/28px 'Liberation Sans',sans-serif;color:#80708F;letter-spacing:0.220px;white-space:pre;-webkit-text-stroke:0.25px #80708F;">Mar 14, 2024 8:12:46 PM CET</div>
<div style="position:absolute;z-index:2;left:173.62px;top:2124.75px;font:400 28px/28px 'Liberation Sans',sans-serif;color:#2562D4;letter-spacing:1.332px;white-space:pre;-webkit-text-stroke:0.25px #2562D4;">/api/0/organizations/{organization_slug}/releases/</div>
<div style="position:absolute;z-index:2;left:1618.52px;top:2124.75px;font:400 28px/28px 'Liberation Sans',sans-serif;color:#3E3446;letter-spacing:1.268px;white-space:pre;-webkit-text-stroke:0.25px #3E3446;">http.server</div>
<div style="position:absolute;z-index:2;left:2006.52px;top:2124.75px;font:400 28px/28px 'Liberation Sans',sans-serif;color:#3E3446;letter-spacing:1.427px;white-space:pre;-webkit-text-stroke:0.25px #3E3446;">240.00ms</div>
<div style="position:absolute;z-index:2;left:2203.52px;top:2124.75px;font:400 28px/28px 'Liberation Sans',sans-serif;color:#80708F;letter-spacing:0.300px;white-space:pre;-webkit-text-stroke:0.25px #80708F;">Mar 17, 2024 3:18:11 PM CET</div>
</body></html>
